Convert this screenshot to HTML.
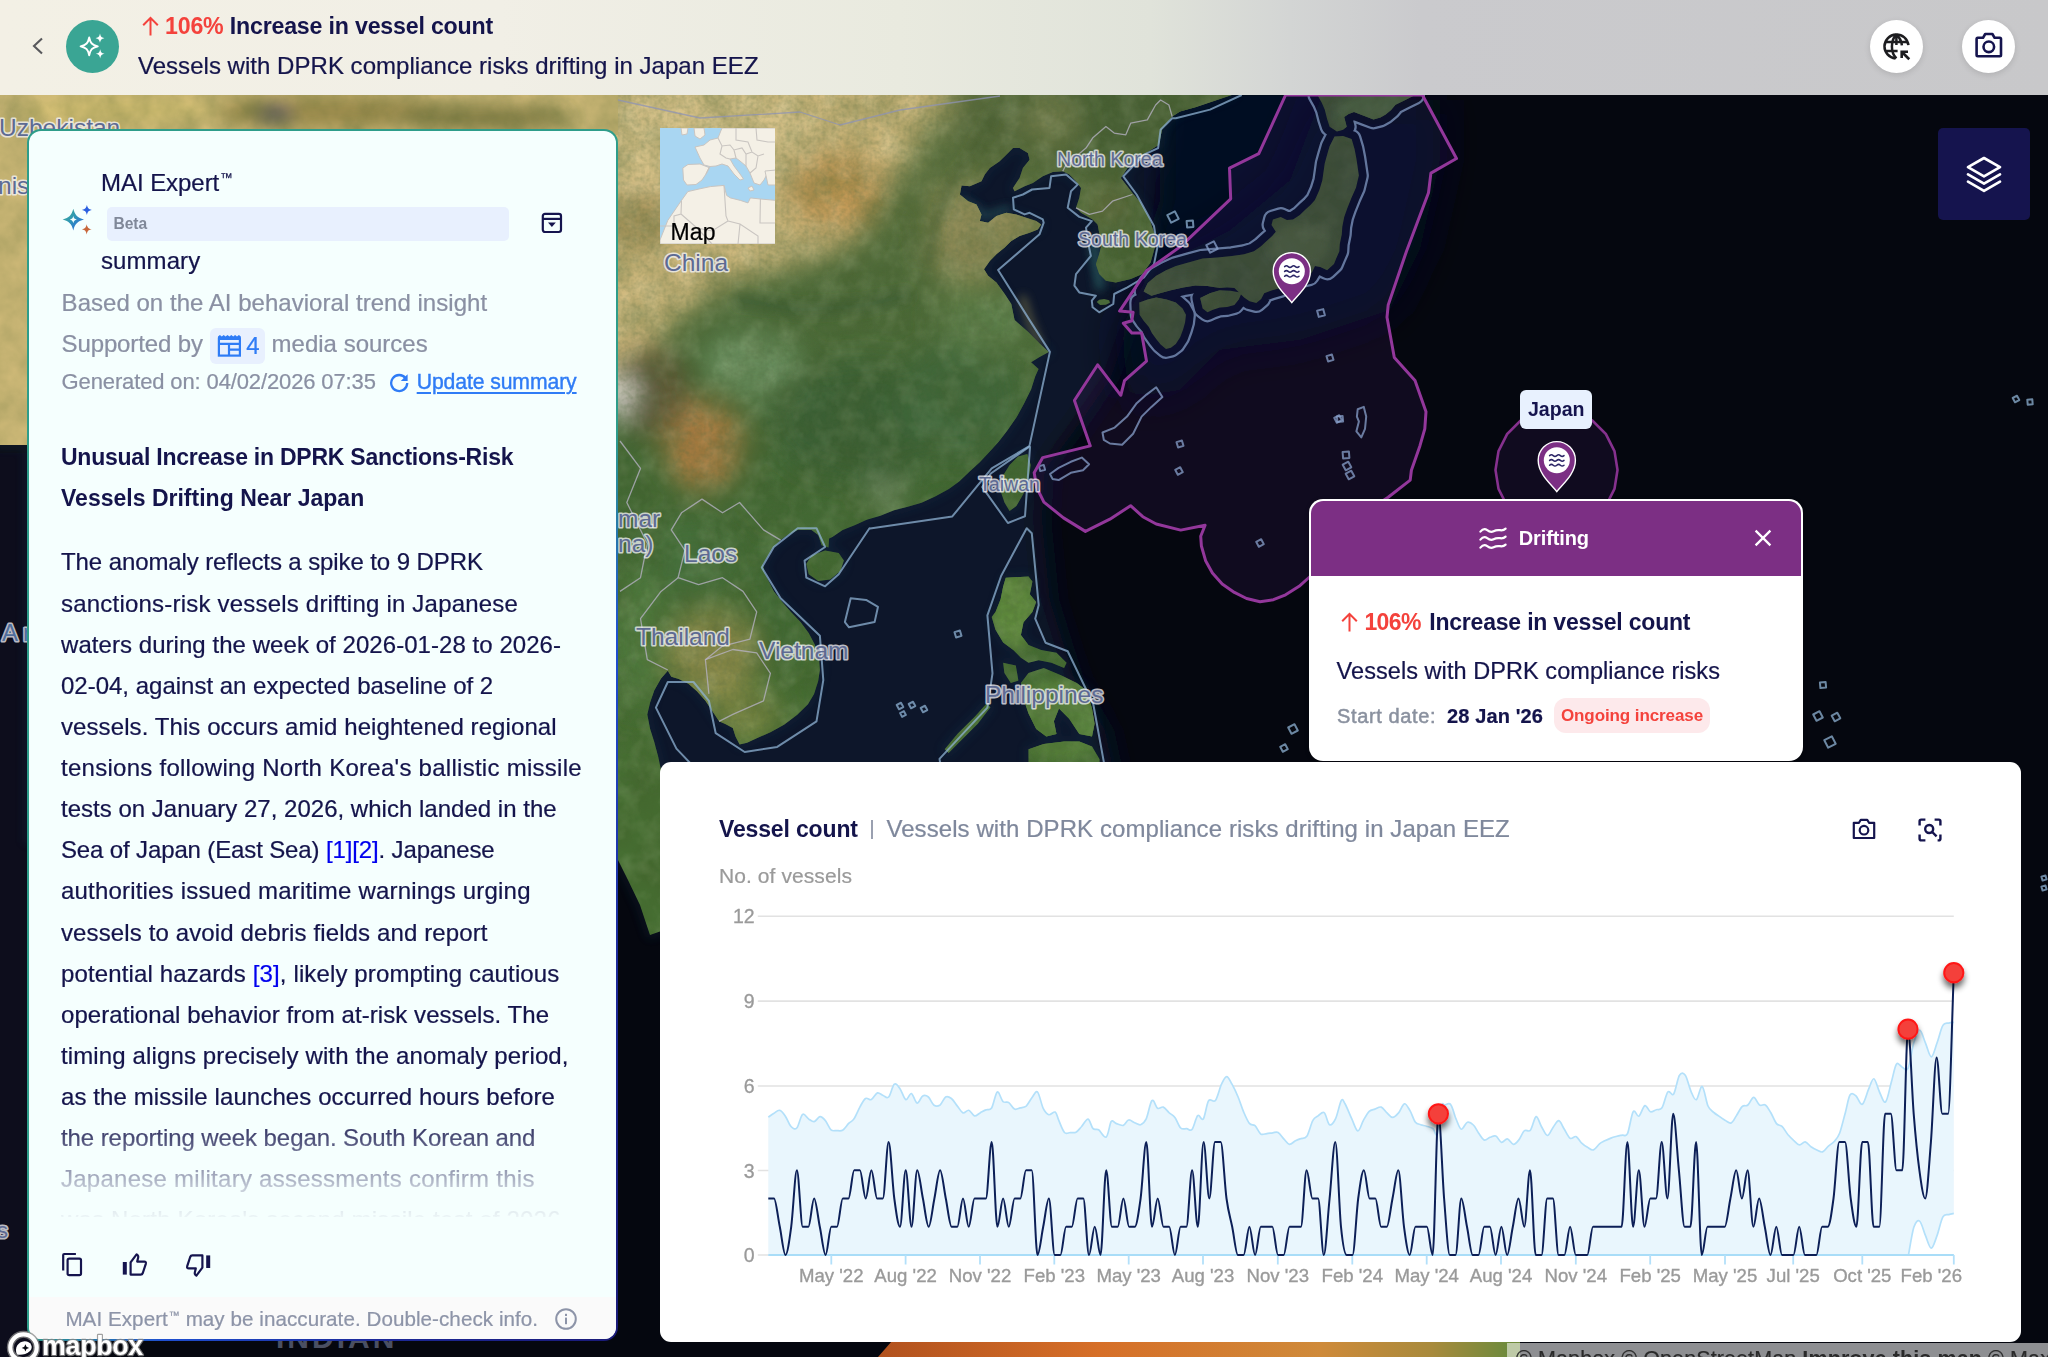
<!DOCTYPE html>
<html lang="en">
<head>
<meta charset="utf-8">
<title>Increase in vessel count</title>
<style>
*{box-sizing:border-box}
html,body{margin:0;padding:0}
body{width:2048px;height:1357px;overflow:hidden;position:relative;background:#05070f;font-family:"Liberation Sans",sans-serif;color:#14144b;font-size:24px;-webkit-font-smoothing:antialiased;-webkit-text-stroke:.22px}
#panel,#card,#popup,#hdr,#jlabel,#thumb,#attr{will-change:transform}
b,h3,.t1,.r1,.pt,.beta,.chipr,#jlabel{-webkit-text-stroke:0}
.abs{position:absolute}
#map{position:absolute;left:0;top:0;width:2048px;height:1357px}
/* header */
#hdr{position:absolute;left:0;top:0;width:2048px;height:95px;background:linear-gradient(90deg,#f3f0e5 0px,#f1efe6 500px,#e9eadf 900px,#e0e3da 1150px,#d3d5d4 1290px,#cacacd 1420px,#c8c8ca 2048px)}
#hdr .back{position:absolute;left:31px;top:36px;width:14px;height:20px}
#hdr .ai{position:absolute;left:66px;top:20px;width:53px;height:53px;border-radius:50%;background:#3aa594}
#hdr .t1{position:absolute;left:141px;top:10.5px;height:30px;line-height:30px;font-weight:700;font-size:23.2px;letter-spacing:-0.2px;white-space:nowrap}
#hdr .t2{position:absolute;left:138px;top:51px;height:30px;line-height:30px;font-size:24px;letter-spacing:0.03px;white-space:nowrap}
.red{color:#f4423c}
.rbtn{position:absolute;top:20px;width:53px;height:53px;border-radius:50%;background:#fff;box-shadow:0 2px 6px rgba(0,0,0,.12)}
#layers{position:absolute;left:1938px;top:128px;width:92px;height:92px;border-radius:5px;background:#15144e}
/* panel */
#panel{position:absolute;left:27px;top:129px;width:591px;height:1212px;border:2px solid transparent;border-radius:14px;background:linear-gradient(#f5fffe,#f5fffe) padding-box,linear-gradient(123deg,#2e9d8a 0%,#2e9d8a 57%,#1f4fd0 67%,#1d2a9a 82%,#1a1a78 100%) border-box;overflow:hidden}
#panel .gray{color:#8a8fa3}
/* popup */
#popup{position:absolute;left:1310px;top:499px;width:492px;height:261px;border-radius:13px;background:#fff;overflow:hidden;border:1.5px solid #fff}
#popup .ph{position:absolute;left:0;top:0;right:0;height:76px;background:#7b2f83}
/* chart card */
#card{position:absolute;left:660px;top:762px;width:1361px;height:580px;border-radius:11px;background:#fff}
</style>
</head>
<body>

<svg id="map" width="2048" height="1357" viewBox="0 0 2048 1357" font-family="Liberation Sans, sans-serif">
<defs>
<linearGradient id="landg" gradientUnits="userSpaceOnUse" x1="0" y1="95" x2="0" y2="760"><stop offset="0" stop-color="#5f7240"/><stop offset=".3" stop-color="#4f6c3a"/><stop offset=".55" stop-color="#426834"/><stop offset="1" stop-color="#466e32"/></linearGradient>
<filter id="noise" x="0" y="0" width="100%" height="100%"><feTurbulence type="fractalNoise" baseFrequency="0.03" numOctaves="4" seed="7"/><feColorMatrix type="matrix" values="0 0 0 0 0.05  0 0 0 0 0.1  0 0 0 0 0.02  .9 .6 .3 0 -.66"/></filter>
<filter id="noise2" x="0" y="0" width="100%" height="100%"><feTurbulence type="fractalNoise" baseFrequency="0.05" numOctaves="3" seed="21"/><feColorMatrix type="matrix" values="0 0 0 0 .85  0 0 0 0 .9  0 0 0 0 .65  .8 .5 .3 0 -.7"/></filter>
<filter id="noise3" x="0" y="0" width="100%" height="100%"><feTurbulence type="fractalNoise" baseFrequency="0.22" numOctaves="2" seed="3"/><feColorMatrix type="matrix" values="0 0 0 0 0.08  0 0 0 0 0.14  0 0 0 0 0.05  1.2 .8 0 0 -.78"/></filter>
<filter id="b2"><feGaussianBlur stdDeviation="2"/></filter>
<filter id="b5"><feGaussianBlur stdDeviation="5"/></filter>
<filter id="b9"><feGaussianBlur stdDeviation="9"/></filter>
<filter id="b14"><feGaussianBlur stdDeviation="14"/></filter>
<filter id="b22" x="-20%" y="-20%" width="140%" height="140%"><feGaussianBlur stdDeviation="22"/></filter>
<clipPath id="landclip">
<polygon points="0.0,0.0 1232.0,0.0 1232.0,95.0 1231.9,95.0 1195.3,107.2 1180.0,111.6 1172.2,116.6 1162.3,128.2 1158.9,144.8 1145.7,153.1 1127.4,168.0 1120.8,177.9 1125.8,184.6 1132.4,192.9 1140.7,202.8 1149.0,217.7 1154.0,232.7 1154.8,247.6 1150.6,262.5 1142.4,274.1 1130.7,279.1 1115.8,282.4 1105.9,280.8 1099.2,274.1 1095.9,264.2 1099.2,254.2 1101.7,244.3 1099.2,232.7 1097.6,224.4 1092.6,219.4 1081.0,212.8 1076.0,207.8 1079.3,197.8 1081.0,187.9 1076.0,181.2 1069.4,174.6 1062.7,171.3 1052.8,172.1 1042.8,176.3 1032.9,182.9 1024.6,186.2 1014.6,191.2 1013.0,187.9 1019.6,177.9 1022.9,168.0 1029.6,159.7 1027.9,153.1 1019.6,148.1 1013.0,148.1 1006.3,154.7 999.7,161.3 989.8,168.0 984.8,174.6 981.5,181.2 969.9,186.2 961.6,185.4 959.9,194.5 968.2,201.2 976.5,204.5 981.5,214.4 979.8,221.1 988.1,222.7 996.4,216.1 1006.3,212.8 1016.3,214.4 1026.2,217.7 1036.2,221.1 1041.2,224.4 1037.9,229.4 1029.6,232.7 1019.6,236.0 1011.3,241.0 1004.7,247.6 996.4,254.2 989.8,260.9 984.0,269.2 988.1,275.8 996.4,282.4 1004.7,294.0 1011.3,304.0 1014.6,320.1 1027.7,331.4 1039.7,343.4 1048.9,351.9 1039.7,357.1 1031.1,362.2 1038.6,369.1 1035.2,376.6 1031.1,389.6 1024.2,403.3 1016.7,417.0 1007.1,430.7 998.6,441.7 990.0,451.3 979.7,462.2 969.4,471.8 959.2,481.4 948.9,489.0 935.2,496.5 921.5,502.7 907.8,506.8 894.1,510.2 880.4,515.7 866.7,519.8 854.7,525.3 842.7,530.1 832.4,536.9 825.5,540.4 825.1,528.2 829.2,536.7 828.5,547.6 821.6,545.2 818.2,535.0 811.4,529.9 797.7,529.9 787.5,535.0 780.6,540.1 772.1,548.7 767.0,557.2 762.9,564.0 764.2,572.6 773.8,591.4 782.3,602.3 790.9,611.9 800.5,622.1 808.7,633.1 814.8,644.4 818.9,656.3 819.9,670.0 818.2,680.9 814.1,693.9 808.0,704.2 797.0,715.1 784.0,724.7 770.4,732.2 756.7,738.3 747.1,742.8 739.6,744.5 735.5,736.6 732.8,728.1 725.3,724.0 719.1,721.3 712.3,711.0 705.4,700.8 696.9,691.2 688.4,683.7 678.8,678.9 671.3,676.8 667.8,670.7 661.0,678.5 654.2,690.5 650.1,702.5 647.3,714.4 650.1,728.8 654.2,741.8 658.3,757.1 661.0,770.1 662.0,775.0 668.0,800.0 664.0,840.0 660.0,880.0 664.0,930.0 650.0,935.0 640.0,905.0 628.0,880.0 618.0,860.0 600.0,840.0 27.0,840.0 27.0,445.0 0.0,445.0"/>
<polygon points="1027.4,454.0 1030.8,464.9 1028.7,478.6 1023.3,494.0 1016.4,505.9 1009.6,511.1 1004.5,502.5 1000.0,489.5 1002.1,476.9 1009.6,464.9 1018.2,456.4"/>
<polygon points="811.4,555.5 825.1,550.4 838.7,553.1 843.9,560.6 840.4,570.9 830.2,579.4 818.2,581.1 808.7,574.3 806.3,564.0"/>
<polygon points="1005.7,577.8 1028.5,576.5 1032.4,581.6 1029.8,594.3 1036.2,601.9 1032.4,612.0 1023.5,622.2 1020.9,634.9 1028.5,645.1 1041.2,650.1 1056.5,652.7 1066.6,662.8 1064.1,667.9 1051.4,662.8 1038.7,660.3 1028.5,662.8 1020.9,657.8 1013.3,650.1 1003.1,642.5 995.5,629.8 991.7,617.1 995.5,612.0 1000.6,599.3 1003.1,586.7"/>
<polygon points="1003.1,662.8 1015.8,665.4 1018.4,680.6 1010.8,683.1 1004.4,673.0"/>
<polygon points="1028.5,673.0 1043.8,667.9 1061.6,675.5 1076.8,683.1 1086.9,690.8 1092.0,708.5 1094.6,723.8 1092.0,736.5 1079.3,733.9 1069.2,718.7 1059.0,708.5 1053.9,721.2 1056.5,733.9 1046.3,736.5 1036.2,728.9 1028.5,713.6 1023.5,698.4 1020.9,683.1"/>
<polygon points="986.6,703.5 990.5,707.3 977.8,723.8 962.5,739.0 948.6,753.0 944.7,749.2 957.4,733.9 975.2,716.2"/>
<polygon points="1028.5,749.2 1043.8,744.1 1064.1,741.6 1079.3,741.6 1092.0,746.6 1099.6,759.3 1099.6,770.8 1028.5,770.8"/>
</clipPath>
<clipPath id="jpclip">
<polygon points="1334.5,136.5 1343.0,136.0 1351.6,138.9 1354.5,148.7 1356.4,158.5 1358.9,175.6 1356.0,187.8 1351.6,197.5 1347.2,208.5 1344.2,217.1 1342.3,226.8 1341.8,234.2 1339.8,243.9 1339.4,251.2 1336.4,258.1 1334.0,263.9 1327.1,270.3 1320.3,267.1 1314.9,265.9 1312.5,271.3 1309.6,276.2 1301.5,278.1 1293.0,280.5 1286.1,284.2 1280.8,287.9 1272.2,290.3 1264.2,293.2 1261.2,298.9 1256.3,303.0 1249.5,301.3 1244.1,297.6 1238.0,291.5 1234.4,287.9 1227.1,287.4 1219.7,287.9 1207.5,285.9 1195.3,285.4 1183.1,287.4 1170.9,290.3 1159.9,293.2 1151.4,295.7 1143.6,291.5 1147.7,283.0 1156.2,275.7 1166.0,270.3 1175.8,265.9 1189.2,262.2 1202.6,258.6 1217.3,257.4 1231.9,256.1 1244.1,254.2 1253.9,251.2 1260.7,246.4 1266.1,241.5 1272.2,236.1 1275.9,231.7 1271.5,224.9 1272.9,219.5 1280.8,217.1 1286.9,220.0 1293.0,219.5 1299.8,215.1 1305.2,209.7 1310.5,204.9 1314.9,200.0 1319.3,190.2 1322.3,180.4 1323.7,170.7 1324.7,163.4 1327.1,154.8 1329.6,146.3"/>
<polygon points="1139.2,302.5 1147.7,299.6 1156.2,297.6 1166.5,299.6 1175.8,302.5 1182.6,308.6 1186.0,314.7 1185.1,322.5 1183.1,329.4 1180.2,337.2 1175.8,344.0 1170.9,347.7 1166.0,348.9 1160.6,344.5 1156.2,339.1 1151.9,333.0 1148.9,326.9 1143.6,320.8 1139.6,314.7"/>
<polygon points="1200.2,298.1 1210.0,293.2 1219.7,290.3 1230.7,290.8 1241.7,292.8 1238.8,299.6 1234.4,305.0 1227.1,306.9 1219.7,307.4 1212.9,309.8 1207.5,312.3 1202.6,308.6"/>
<polygon points="1317.4,95.0 1321.8,102.8 1324.7,109.6 1327.1,118.9 1329.6,126.7 1336.9,131.6 1343.0,129.7 1346.7,126.7 1344.2,117.0 1348.6,114.0 1354.0,112.1 1363.8,115.8 1373.5,119.4 1380.4,117.5 1385.7,114.5 1391.1,110.1 1395.5,104.8 1405.3,99.9 1415.0,95.0 1415.0,85.2 1317.4,85.2"/>
</clipPath><clipPath id="mapclip"><rect x="0" y="95" width="2048" height="1262"/></clipPath></defs>
<rect width="2048" height="1357" fill="#05070f"/>
<g clip-path="url(#mapclip)">
<polygon points="560.0,60.0 1240.0,60.0 1200.0,120.0 1165.0,180.0 1160.0,240.0 1150.0,290.0 1128.0,330.0 1110.0,380.0 1075.0,430.0 1045.0,470.0 1042.0,520.0 1050.0,600.0 1075.0,680.0 1105.0,730.0 1120.0,800.0 560.0,800.0" fill="#09152c" filter="url(#b14)"/>
<polygon points="1160.0,80.0 1345.0,80.0 1350.0,150.0 1335.0,215.0 1295.0,265.0 1225.0,292.0 1150.0,312.0 1140.0,260.0 1160.0,200.0" fill="#050a20" filter="url(#b14)"/>
<polygon points="1120.0,330.0 1150.0,270.0 1230.0,230.0 1290.0,180.0 1320.0,100.0 1440.0,100.0 1440.0,160.0 1420.0,250.0 1390.0,310.0 1300.0,340.0 1220.0,350.0 1180.0,390.0 1130.0,400.0" fill="#050922" filter="url(#b22)"/>
<rect x="-20" y="445" width="60" height="930" fill="#08111f" filter="url(#b9)"/>
<g filter="url(#b5)" opacity=".4">
<polygon points="0.0,0.0 1232.0,0.0 1232.0,95.0 1231.9,95.0 1195.3,107.2 1180.0,111.6 1172.2,116.6 1162.3,128.2 1158.9,144.8 1145.7,153.1 1127.4,168.0 1120.8,177.9 1125.8,184.6 1132.4,192.9 1140.7,202.8 1149.0,217.7 1154.0,232.7 1154.8,247.6 1150.6,262.5 1142.4,274.1 1130.7,279.1 1115.8,282.4 1105.9,280.8 1099.2,274.1 1095.9,264.2 1099.2,254.2 1101.7,244.3 1099.2,232.7 1097.6,224.4 1092.6,219.4 1081.0,212.8 1076.0,207.8 1079.3,197.8 1081.0,187.9 1076.0,181.2 1069.4,174.6 1062.7,171.3 1052.8,172.1 1042.8,176.3 1032.9,182.9 1024.6,186.2 1014.6,191.2 1013.0,187.9 1019.6,177.9 1022.9,168.0 1029.6,159.7 1027.9,153.1 1019.6,148.1 1013.0,148.1 1006.3,154.7 999.7,161.3 989.8,168.0 984.8,174.6 981.5,181.2 969.9,186.2 961.6,185.4 959.9,194.5 968.2,201.2 976.5,204.5 981.5,214.4 979.8,221.1 988.1,222.7 996.4,216.1 1006.3,212.8 1016.3,214.4 1026.2,217.7 1036.2,221.1 1041.2,224.4 1037.9,229.4 1029.6,232.7 1019.6,236.0 1011.3,241.0 1004.7,247.6 996.4,254.2 989.8,260.9 984.0,269.2 988.1,275.8 996.4,282.4 1004.7,294.0 1011.3,304.0 1014.6,320.1 1027.7,331.4 1039.7,343.4 1048.9,351.9 1039.7,357.1 1031.1,362.2 1038.6,369.1 1035.2,376.6 1031.1,389.6 1024.2,403.3 1016.7,417.0 1007.1,430.7 998.6,441.7 990.0,451.3 979.7,462.2 969.4,471.8 959.2,481.4 948.9,489.0 935.2,496.5 921.5,502.7 907.8,506.8 894.1,510.2 880.4,515.7 866.7,519.8 854.7,525.3 842.7,530.1 832.4,536.9 825.5,540.4 825.1,528.2 829.2,536.7 828.5,547.6 821.6,545.2 818.2,535.0 811.4,529.9 797.7,529.9 787.5,535.0 780.6,540.1 772.1,548.7 767.0,557.2 762.9,564.0 764.2,572.6 773.8,591.4 782.3,602.3 790.9,611.9 800.5,622.1 808.7,633.1 814.8,644.4 818.9,656.3 819.9,670.0 818.2,680.9 814.1,693.9 808.0,704.2 797.0,715.1 784.0,724.7 770.4,732.2 756.7,738.3 747.1,742.8 739.6,744.5 735.5,736.6 732.8,728.1 725.3,724.0 719.1,721.3 712.3,711.0 705.4,700.8 696.9,691.2 688.4,683.7 678.8,678.9 671.3,676.8 667.8,670.7 661.0,678.5 654.2,690.5 650.1,702.5 647.3,714.4 650.1,728.8 654.2,741.8 658.3,757.1 661.0,770.1 662.0,775.0 668.0,800.0 664.0,840.0 660.0,880.0 664.0,930.0 650.0,935.0 640.0,905.0 628.0,880.0 618.0,860.0 600.0,840.0 27.0,840.0 27.0,445.0 0.0,445.0" fill="none" stroke="#163650" stroke-width="5"/>
<polygon points="1027.4,454.0 1030.8,464.9 1028.7,478.6 1023.3,494.0 1016.4,505.9 1009.6,511.1 1004.5,502.5 1000.0,489.5 1002.1,476.9 1009.6,464.9 1018.2,456.4" fill="none" stroke="#163650" stroke-width="5"/>
<polygon points="811.4,555.5 825.1,550.4 838.7,553.1 843.9,560.6 840.4,570.9 830.2,579.4 818.2,581.1 808.7,574.3 806.3,564.0" fill="none" stroke="#163650" stroke-width="5"/>
<polygon points="1005.7,577.8 1028.5,576.5 1032.4,581.6 1029.8,594.3 1036.2,601.9 1032.4,612.0 1023.5,622.2 1020.9,634.9 1028.5,645.1 1041.2,650.1 1056.5,652.7 1066.6,662.8 1064.1,667.9 1051.4,662.8 1038.7,660.3 1028.5,662.8 1020.9,657.8 1013.3,650.1 1003.1,642.5 995.5,629.8 991.7,617.1 995.5,612.0 1000.6,599.3 1003.1,586.7" fill="none" stroke="#163650" stroke-width="5"/>
<polygon points="1003.1,662.8 1015.8,665.4 1018.4,680.6 1010.8,683.1 1004.4,673.0" fill="none" stroke="#163650" stroke-width="5"/>
<polygon points="1028.5,673.0 1043.8,667.9 1061.6,675.5 1076.8,683.1 1086.9,690.8 1092.0,708.5 1094.6,723.8 1092.0,736.5 1079.3,733.9 1069.2,718.7 1059.0,708.5 1053.9,721.2 1056.5,733.9 1046.3,736.5 1036.2,728.9 1028.5,713.6 1023.5,698.4 1020.9,683.1" fill="none" stroke="#163650" stroke-width="5"/>
<polygon points="986.6,703.5 990.5,707.3 977.8,723.8 962.5,739.0 948.6,753.0 944.7,749.2 957.4,733.9 975.2,716.2" fill="none" stroke="#163650" stroke-width="5"/>
<polygon points="1028.5,749.2 1043.8,744.1 1064.1,741.6 1079.3,741.6 1092.0,746.6 1099.6,759.3 1099.6,770.8 1028.5,770.8" fill="none" stroke="#163650" stroke-width="5"/>
</g>
<g filter="url(#b5)" opacity=".8"><path d="M1022 296 L1030 322 L1040 346" stroke="#7f7a4e" stroke-width="7" fill="none" stroke-opacity=".8"/><path d="M1092 236 L1096 262 L1100 290" stroke="#2e6a6a" stroke-width="7" fill="none"/><path d="M962 200 L985 216 L1010 208" stroke="#2a5a5e" stroke-width="5" fill="none"/></g>
<g clip-path="url(#landclip)">
<rect x="0" y="0" width="1320" height="1357" fill="url(#landg)"/>
<g filter="url(#b14)">
<polygon points="0.0,0.0 965.0,0.0 948.0,100.0 908.0,160.0 882.0,200.0 852.0,245.0 800.0,262.0 740.0,280.0 700.0,300.0 650.0,345.0 600.0,380.0 0.0,380.0" fill="#d0b97e"/>
<ellipse cx="700" cy="150" rx="120" ry="70" fill="#d6c188"/>
<ellipse cx="835" cy="190" rx="50" ry="40" fill="#c49a56"/>
<ellipse cx="640" cy="220" rx="40" ry="30" fill="#a8945c"/>
<polygon points="932.0,185.0 1000.0,180.0 1046.0,215.0 1048.0,232.0 1015.0,252.0 1002.0,278.0 960.0,288.0 928.0,262.0" fill="#918c58"/>
<polygon points="940.0,275.0 1005.0,285.0 1020.0,330.0 990.0,350.0 940.0,330.0" fill="#66804a"/>
<ellipse cx="1120" cy="120" rx="120" ry="60" fill="#4a6034"/>
<ellipse cx="1050" cy="120" rx="28" ry="34" fill="#6f7a4a"/>
<ellipse cx="985" cy="125" rx="26" ry="40" fill="#5a6a3c"/>
<ellipse cx="1125" cy="235" rx="30" ry="60" fill="#486436"/>
<ellipse cx="1108" cy="205" rx="16" ry="16" fill="#6a6e40"/>
<ellipse cx="753" cy="364" rx="48" ry="32" fill="#6a9060"/>
<ellipse cx="703" cy="445" rx="38" ry="44" fill="#b07e42"/>
<ellipse cx="650" cy="390" rx="40" ry="45" fill="#5e5636"/>
<ellipse cx="618" cy="395" rx="18" ry="22" fill="#d8d4cc"/>
<ellipse cx="860" cy="420" rx="90" ry="60" fill="#3b6035"/>
<ellipse cx="960" cy="400" rx="60" ry="60" fill="#41683a"/>
<ellipse cx="985" cy="325" rx="42" ry="32" fill="#5c7e48"/>
<ellipse cx="886" cy="496" rx="14" ry="10" fill="#9aa88a"/>
<ellipse cx="712" cy="655" rx="45" ry="45" fill="#8e8c4c"/>
<ellipse cx="745" cy="715" rx="35" ry="25" fill="#7f8a45"/>
<ellipse cx="690" cy="560" rx="50" ry="40" fill="#44703a"/>
<ellipse cx="775" cy="610" rx="20" ry="60" fill="#416b35"/>
<ellipse cx="640" cy="640" rx="25" ry="70" fill="#4f7a3c"/>
</g>
<g filter="url(#b5)" fill="none" stroke-linecap="round"><path d="M1000 105 L975 150 L950 185 L935 225 L928 262" stroke="#4c6034" stroke-width="10" stroke-opacity=".6"/><path d="M740 300 L800 310 L860 306 L905 296" stroke="#3e5c30" stroke-width="16" stroke-opacity=".6"/><path d="M905 215 L915 260" stroke="#55683a" stroke-width="8" stroke-opacity=".5"/></g>
<g filter="url(#b5)"><ellipse cx="1015" cy="610" rx="22" ry="40" fill="#5f8a3e"/><ellipse cx="1060" cy="720" rx="45" ry="40" fill="#56803a"/></g>
<rect x="0" y="95" width="1320" height="1262" filter="url(#noise)" opacity=".5"/>
<rect x="0" y="95" width="1320" height="1262" filter="url(#noise2)" opacity=".28"/>
<rect x="600" y="95" width="720" height="700" filter="url(#noise3)" opacity=".32"/>
</g>
<rect x="0" y="0" width="618" height="445" fill="#cdb877"/>
<g filter="url(#b9)"><ellipse cx="330" cy="112" rx="120" ry="16" fill="#9a8a4c"/><ellipse cx="480" cy="118" rx="90" ry="12" fill="#7f7a42"/><ellipse cx="120" cy="110" rx="100" ry="14" fill="#d4bf72"/><ellipse cx="275" cy="114" rx="18" ry="6" fill="#1a2a6a"/></g>
<rect x="0" y="95" width="618" height="40" filter="url(#noise)" opacity=".45"/>
<rect x="0" y="130" width="27" height="315" filter="url(#noise)" opacity=".35"/>
<g clip-path="url(#jpclip)"><rect x="1100" y="90" width="400" height="300" fill="#36502d"/><g filter="url(#b5)"><ellipse cx="1300" cy="245" rx="30" ry="22" fill="#445f38"/><ellipse cx="1180" cy="290" rx="40" ry="14" fill="#3c5632"/><ellipse cx="1395" cy="115" rx="60" ry="30" fill="#3f6134"/></g><rect x="1100" y="90" width="400" height="300" filter="url(#noise)" opacity=".55"/><rect x="1100" y="90" width="400" height="300" filter="url(#noise2)" opacity=".12"/></g>
<polygon points="1096.7,302.0 1099.2,299.7 1104.2,299.0 1109.2,300.3 1110.0,302.7 1105.9,304.7 1100.1,305.0" fill="#4a6a3a"/>
<linearGradient id="aus" gradientUnits="userSpaceOnUse" x1="880" x2="1507"><stop offset="0" stop-color="#b2521e"/><stop offset=".35" stop-color="#d66f28"/><stop offset=".7" stop-color="#cf8a3a"/><stop offset=".88" stop-color="#a88a3c"/><stop offset="1" stop-color="#6f8a3c"/></linearGradient>
<polygon points="878,1357 892,1341 1520,1341 1520,1357" fill="url(#aus)"/>
<g fill="none" stroke="#8fb3d4" stroke-width="2" stroke-opacity=".75" stroke-linejoin="round">
<path d="M1241.7 95.0 L1210.0 109.6 L1175.8 118.2 L1172.2 118.2 L1160.6 129.8 L1158.1 148.1 L1144.0 154.7 L1123.3 176.3 L1136.6 194.5 L1154.0 226.0 L1157.3 247.6 L1154.0 264.2 L1144.0 277.5 L1127.4 287.4 L1114.2 294.0 L1113.3 304.0 L1099.2 312.3 L1092.6 307.3 L1091.8 300.7 L1095.9 295.7 L1079.3 292.4 L1074.4 285.7 L1076.0 274.1 L1090.9 255.9 L1088.4 244.3 L1086.0 227.7 L1091.8 221.1 L1079.3 216.9 L1067.7 207.8 L1071.0 191.2 L1077.7 184.6 L1066.1 174.6 L1051.1 176.3 L1049.5 187.9 L1032.1 189.5 L1022.9 194.5 L1013.0 197.8 L1013.8 209.4 L1024.6 214.4 L1029.6 212.8 L1042.8 219.4 L1043.7 222.7 L1039.5 234.3 L998.1 270.0 L1029.6 320.1 L1049.9 351.9 L1029.4 446.1 L991.7 468.4 L952.3 516.4 L870.1 528.4 L869.5 528.2 L838.7 574.3 L825.1 586.3 L806.3 577.7 L804.6 560.6 L825.1 547.0 L816.5 528.2 L797.7 528.2 L773.8 547.0 L761.8 567.5 L780.6 598.2 L819.9 635.8 L823.3 680.2 L816.5 721.3 L777.2 746.9 L744.7 752.0 L715.7 733.2 L708.9 700.8 L693.5 682.0 L667.8 682.0 L655.9 707.6 L676.4 748.6 L696.9 770.1"/>
<path d="M1030.1 446.1 L1025.0 516.2 L1007.9 523.0 L982.3 487.1 L990.8 473.5 L1030.1 446.1"/>
<path d="M941.3 770.1 L939.5 758.9 L961.8 734.9 L987.4 707.6 L992.5 673.4 L987.4 615.3 L1001.1 576.0 L1026.7 528.2 L1031.8 533.3 L1038.7 605.1 L1035.2 618.7 L1045.5 642.7 L1067.7 651.2 L1093.3 704.2 L1105.3 770.1"/>
<path d="M850.7 598.2 L866.1 599.9 L878.0 606.8 L874.6 622.1 L849.0 627.3 L844.9 622.1Z"/>
<polygon points="1178.7,218.8 1171.2,222.7 1167.3,215.2 1174.8,211.3"/>
<polygon points="1193.4,226.9 1187.1,227.4 1186.6,221.1 1192.9,220.6"/>
<polygon points="1217.7,248.8 1210.2,252.7 1206.3,245.2 1213.8,241.3"/>
<polygon points="1324.9,315.2 1318.8,316.9 1317.1,310.8 1323.2,309.1"/>
<polygon points="1333.5,359.9 1328.1,361.5 1326.5,356.1 1331.9,354.5"/>
<polygon points="1343.1,421.6 1337.4,422.1 1336.9,416.4 1342.6,415.9"/>
<polygon points="1183.5,445.9 1178.1,447.5 1176.5,442.1 1181.9,440.5"/>
<polygon points="1182.8,472.2 1177.8,474.8 1175.2,469.8 1180.2,467.2"/>
<polygon points="1263.8,544.2 1258.8,546.8 1256.2,541.8 1261.2,539.2"/>
<polygon points="1341.8,420.2 1336.8,422.8 1334.2,417.8 1339.2,415.2"/>
<polygon points="1349.4,457.9 1343.1,458.4 1342.6,452.1 1348.9,451.6"/>
<polygon points="1351.3,467.3 1345.7,470.3 1342.7,464.7 1348.3,461.7"/>
<polygon points="1354.3,476.3 1348.7,479.3 1345.7,473.7 1351.3,470.7"/>
<polygon points="961.5,635.9 956.1,637.5 954.5,632.1 959.9,630.5"/>
<polygon points="1045.1,469.7 1040.3,471.1 1038.9,466.3 1043.7,464.9"/>
<polygon points="1826.1,687.6 1820.4,688.1 1819.9,682.4 1825.6,681.9"/>
<polygon points="1840.3,718.3 1834.7,721.3 1831.7,715.7 1837.3,712.7"/>
<polygon points="1822.8,717.5 1816.5,720.8 1813.2,714.5 1819.5,711.2"/>
<polygon points="1835.7,743.8 1828.2,747.7 1824.3,740.2 1831.8,736.3"/>
<polygon points="1297.8,730.5 1291.5,733.8 1288.2,727.5 1294.5,724.2"/>
<polygon points="1287.8,749.2 1282.8,751.8 1280.2,746.8 1285.2,744.2"/>
<polygon points="2019.3,400.0 2015.0,402.3 2012.7,398.0 2017.0,395.7"/>
<polygon points="2032.7,404.3 2027.7,404.7 2027.3,399.7 2032.3,399.3"/>
<polygon points="2046.6,879.4 2042.6,880.6 2041.4,876.6 2045.4,875.4"/>
<polygon points="2046.6,889.4 2042.6,890.6 2041.4,886.6 2045.4,885.4"/>
<polygon points="903.3,707.0 899.0,709.3 896.7,705.0 901.0,702.7"/>
<polygon points="915.3,706.0 911.0,708.3 908.7,704.0 913.0,701.7"/>
<polygon points="927.3,710.0 923.0,712.3 920.7,708.0 925.0,705.7"/>
<polygon points="905.9,714.9 902.1,716.9 900.1,713.1 903.9,711.1"/>
<polygon points="1100.9,1.9 1097.1,3.9 1095.1,0.1 1098.9,-1.9"/>
<path d="M1357.7 409.3 L1363.8 406.9 L1366.2 416.6 L1365.0 428.8 L1361.3 437.4 L1356.4 431.3 L1358.9 421.5 L1356.9 416.6Z"/>
<path d="M1102.5 432.5 L1114.7 427.6 L1127.0 416.6 L1136.7 403.2 L1146.5 394.6 L1156.2 387.3 L1162.4 397.1 L1151.4 406.9 L1141.6 416.6 L1133.1 433.7 L1122.1 444.7 L1109.9 443.5 L1103.8 439.8Z"/>
<path d="M1050.0 474.0 L1058.6 467.9 L1070.8 461.8 L1081.8 457.6 L1089.1 464.2 L1083.0 470.3 L1070.8 472.8 L1058.6 480.1 L1052.5 478.9Z"/>
</g>
<mask id="jpring" maskUnits="userSpaceOnUse" x="1080" y="60" width="460" height="360"><rect x="1080" y="60" width="460" height="360" fill="#000"/>
<polygon points="1334.5,136.5 1343.0,136.0 1351.6,138.9 1354.5,148.7 1356.4,158.5 1358.9,175.6 1356.0,187.8 1351.6,197.5 1347.2,208.5 1344.2,217.1 1342.3,226.8 1341.8,234.2 1339.8,243.9 1339.4,251.2 1336.4,258.1 1334.0,263.9 1327.1,270.3 1320.3,267.1 1314.9,265.9 1312.5,271.3 1309.6,276.2 1301.5,278.1 1293.0,280.5 1286.1,284.2 1280.8,287.9 1272.2,290.3 1264.2,293.2 1261.2,298.9 1256.3,303.0 1249.5,301.3 1244.1,297.6 1238.0,291.5 1234.4,287.9 1227.1,287.4 1219.7,287.9 1207.5,285.9 1195.3,285.4 1183.1,287.4 1170.9,290.3 1159.9,293.2 1151.4,295.7 1143.6,291.5 1147.7,283.0 1156.2,275.7 1166.0,270.3 1175.8,265.9 1189.2,262.2 1202.6,258.6 1217.3,257.4 1231.9,256.1 1244.1,254.2 1253.9,251.2 1260.7,246.4 1266.1,241.5 1272.2,236.1 1275.9,231.7 1271.5,224.9 1272.9,219.5 1280.8,217.1 1286.9,220.0 1293.0,219.5 1299.8,215.1 1305.2,209.7 1310.5,204.9 1314.9,200.0 1319.3,190.2 1322.3,180.4 1323.7,170.7 1324.7,163.4 1327.1,154.8 1329.6,146.3" fill="#fff" stroke="#fff" stroke-width="20" stroke-linejoin="round"/>
<polygon points="1139.2,302.5 1147.7,299.6 1156.2,297.6 1166.5,299.6 1175.8,302.5 1182.6,308.6 1186.0,314.7 1185.1,322.5 1183.1,329.4 1180.2,337.2 1175.8,344.0 1170.9,347.7 1166.0,348.9 1160.6,344.5 1156.2,339.1 1151.9,333.0 1148.9,326.9 1143.6,320.8 1139.6,314.7" fill="#fff" stroke="#fff" stroke-width="20" stroke-linejoin="round"/>
<polygon points="1200.2,298.1 1210.0,293.2 1219.7,290.3 1230.7,290.8 1241.7,292.8 1238.8,299.6 1234.4,305.0 1227.1,306.9 1219.7,307.4 1212.9,309.8 1207.5,312.3 1202.6,308.6" fill="#fff" stroke="#fff" stroke-width="20" stroke-linejoin="round"/>
<polygon points="1317.4,95.0 1321.8,102.8 1324.7,109.6 1327.1,118.9 1329.6,126.7 1336.9,131.6 1343.0,129.7 1346.7,126.7 1344.2,117.0 1348.6,114.0 1354.0,112.1 1363.8,115.8 1373.5,119.4 1380.4,117.5 1385.7,114.5 1391.1,110.1 1395.5,104.8 1405.3,99.9 1415.0,95.0 1415.0,85.2 1317.4,85.2" fill="#fff" stroke="#fff" stroke-width="20" stroke-linejoin="round"/>
<polygon points="1334.5,136.5 1343.0,136.0 1351.6,138.9 1354.5,148.7 1356.4,158.5 1358.9,175.6 1356.0,187.8 1351.6,197.5 1347.2,208.5 1344.2,217.1 1342.3,226.8 1341.8,234.2 1339.8,243.9 1339.4,251.2 1336.4,258.1 1334.0,263.9 1327.1,270.3 1320.3,267.1 1314.9,265.9 1312.5,271.3 1309.6,276.2 1301.5,278.1 1293.0,280.5 1286.1,284.2 1280.8,287.9 1272.2,290.3 1264.2,293.2 1261.2,298.9 1256.3,303.0 1249.5,301.3 1244.1,297.6 1238.0,291.5 1234.4,287.9 1227.1,287.4 1219.7,287.9 1207.5,285.9 1195.3,285.4 1183.1,287.4 1170.9,290.3 1159.9,293.2 1151.4,295.7 1143.6,291.5 1147.7,283.0 1156.2,275.7 1166.0,270.3 1175.8,265.9 1189.2,262.2 1202.6,258.6 1217.3,257.4 1231.9,256.1 1244.1,254.2 1253.9,251.2 1260.7,246.4 1266.1,241.5 1272.2,236.1 1275.9,231.7 1271.5,224.9 1272.9,219.5 1280.8,217.1 1286.9,220.0 1293.0,219.5 1299.8,215.1 1305.2,209.7 1310.5,204.9 1314.9,200.0 1319.3,190.2 1322.3,180.4 1323.7,170.7 1324.7,163.4 1327.1,154.8 1329.6,146.3" fill="#000" stroke="#000" stroke-width="15.5" stroke-linejoin="round"/>
<polygon points="1139.2,302.5 1147.7,299.6 1156.2,297.6 1166.5,299.6 1175.8,302.5 1182.6,308.6 1186.0,314.7 1185.1,322.5 1183.1,329.4 1180.2,337.2 1175.8,344.0 1170.9,347.7 1166.0,348.9 1160.6,344.5 1156.2,339.1 1151.9,333.0 1148.9,326.9 1143.6,320.8 1139.6,314.7" fill="#000" stroke="#000" stroke-width="15.5" stroke-linejoin="round"/>
<polygon points="1200.2,298.1 1210.0,293.2 1219.7,290.3 1230.7,290.8 1241.7,292.8 1238.8,299.6 1234.4,305.0 1227.1,306.9 1219.7,307.4 1212.9,309.8 1207.5,312.3 1202.6,308.6" fill="#000" stroke="#000" stroke-width="15.5" stroke-linejoin="round"/>
<polygon points="1317.4,95.0 1321.8,102.8 1324.7,109.6 1327.1,118.9 1329.6,126.7 1336.9,131.6 1343.0,129.7 1346.7,126.7 1344.2,117.0 1348.6,114.0 1354.0,112.1 1363.8,115.8 1373.5,119.4 1380.4,117.5 1385.7,114.5 1391.1,110.1 1395.5,104.8 1405.3,99.9 1415.0,95.0 1415.0,85.2 1317.4,85.2" fill="#000" stroke="#000" stroke-width="15.5" stroke-linejoin="round"/>
</mask>
<rect x="1080" y="60" width="460" height="360" fill="#8fb3d4" opacity=".7" mask="url(#jpring)"/>
<g fill="none" stroke="#b9b4c8" stroke-width="1.3" stroke-opacity=".75" stroke-linejoin="round">
<path d="M1062.7 171.3 L1066.1 164.7 L1086.0 148.1 L1092.6 138.1 L1105.9 126.5 L1114.2 133.1 L1125.8 134.8 L1130.7 123.2 L1147.3 119.9 L1155.6 105.0 L1160.6 100.0 L1168.9 105.0 L1172.2 116.6"/>
<path d="M1076.0 207.8 L1089.3 214.4 L1102.5 211.1 L1112.5 201.2 L1132.4 194.5"/>
<path d="M620.0 441.0 L640.5 468.4 L626.8 502.5 L647.3 543.5 L640.5 577.7 L620.0 591.4"/>
<path d="M780.6 540.1 L763.5 529.9 L739.6 502.5 L722.5 512.8 L702.0 499.1 L681.5 512.8 L671.3 529.9 L684.9 550.4 L678.1 577.7 L698.6 584.6 L722.5 577.7 L743.0 591.4 L756.7 611.9 L749.9 639.2 L722.5 646.1 L705.4 659.7 L708.9 693.9"/>
<path d="M678.1 577.7 L661.0 591.4 L640.5 618.7 L647.3 659.7 L667.8 670.0"/>
<path d="M705.4 659.7 L732.8 649.5 L756.7 652.9 L770.4 673.4 L763.5 700.8 L732.8 714.4 L719.1 721.3"/>
<path d="M618.0 100.0 L700.0 118.0 L800.0 112.0 L840.0 125.0 L900.0 110.0 L1000.0 96.0" stroke="#8d93b4"/>
</g>
<polygon points="1285.6,95.0 1258.8,153.6 1229.5,168.2 1230.7,198.8 1180.7,246.4 1146.5,270.8 1119.6,311.1 1133.1,312.3 1131.8,320.8 1123.3,323.3 1131.8,333.0 1141.6,333.0 1146.5,361.1 1124.5,380.6 1120.8,395.3 1097.7,364.8 1074.5,400.2 1074.5,400.8 1090.3,445.9 1042.7,457.6 1034.2,472.8 1036.6,487.4 1043.9,502.1 1063.5,517.9 1085.4,531.4 1109.9,519.2 1130.6,505.7 1142.8,516.7 1156.2,524.0 1180.7,530.1 1205.1,525.3 1200.7,536.2 1201.4,546.0 1205.6,560.7 1212.4,572.9 1222.2,583.9 1234.4,592.4 1246.6,598.5 1260.0,601.7 1273.4,599.7 1285.6,594.8 1299.1,586.3 1310.1,576.5 1317.4,568.0 1324.7,550.9 1341.8,526.5 1366.2,511.8 1388.2,497.2 1410.2,480.1 1411.4,470.3 1419.9,445.9 1424.8,428.8 1426.0,411.7 1415.0,380.6 1394.3,357.5 1387.0,317.2 1388.2,305.0 1406.5,251.2 1428.5,192.7 1430.9,173.1 1456.5,158.5 1422.4,95.0" fill="rgba(97,43,145,.12)" stroke="#93379b" stroke-width="3" stroke-linejoin="round"/>
<polygon points="1617.5,470.0 1614.5,488.9 1605.9,505.9 1592.4,519.4 1575.4,528.0 1556.5,531.0 1537.6,528.0 1520.6,519.4 1507.1,505.9 1498.5,488.9 1495.5,470.0 1498.5,451.1 1507.1,434.1 1520.6,420.6 1537.6,412.0 1556.5,409.0 1575.4,412.0 1592.4,420.6 1605.9,434.1 1614.5,451.1" fill="rgba(97,43,145,.12)" stroke="#86318e" stroke-width="2.6"/>
<text x="664" y="271" font-size="24.5" text-anchor="start" fill="#5d6a93" stroke="rgba(245,245,250,.75)" stroke-width="3.2" stroke-linejoin="round" paint-order="stroke" letter-spacing="0" >China</text>
<text x="1057" y="165.5" font-size="19.6" text-anchor="start" fill="#5d6a93" stroke="rgba(245,245,250,.75)" stroke-width="3.2" stroke-linejoin="round" paint-order="stroke" letter-spacing="0" >North Korea</text>
<text x="1078" y="245.5" font-size="19.6" text-anchor="start" fill="#5d6a93" stroke="rgba(245,245,250,.75)" stroke-width="3.2" stroke-linejoin="round" paint-order="stroke" letter-spacing="0" >South Korea</text>
<text x="979" y="491" font-size="19.6" text-anchor="start" fill="#5d6a93" stroke="rgba(245,245,250,.75)" stroke-width="3.2" stroke-linejoin="round" paint-order="stroke" letter-spacing="0" >Taiwan</text>
<text x="684" y="561.5" font-size="24.5" text-anchor="start" fill="#5d6a93" stroke="rgba(245,245,250,.75)" stroke-width="3.2" stroke-linejoin="round" paint-order="stroke" letter-spacing="0" >Laos</text>
<text x="636" y="644.5" font-size="24.5" text-anchor="start" fill="#5d6a93" stroke="rgba(245,245,250,.75)" stroke-width="3.2" stroke-linejoin="round" paint-order="stroke" letter-spacing="0" >Thailand</text>
<text x="759" y="659" font-size="24.5" text-anchor="start" fill="#5d6a93" stroke="rgba(245,245,250,.75)" stroke-width="3.2" stroke-linejoin="round" paint-order="stroke" letter-spacing="0" >Vietnam</text>
<text x="985" y="702.5" font-size="24.5" text-anchor="start" fill="#5d6a93" stroke="rgba(245,245,250,.75)" stroke-width="3.2" stroke-linejoin="round" paint-order="stroke" letter-spacing="0" >Philippines</text>
<text x="618" y="527" font-size="24.5" text-anchor="start" fill="#5d6a93" stroke="rgba(245,245,250,.75)" stroke-width="3.2" stroke-linejoin="round" paint-order="stroke" letter-spacing="0" >mar</text>
<text x="618" y="552" font-size="24.5" text-anchor="start" fill="#5d6a93" stroke="rgba(245,245,250,.75)" stroke-width="3.2" stroke-linejoin="round" paint-order="stroke" letter-spacing="0" >na)</text>
<text x="-1" y="136" font-size="24.5" text-anchor="start" fill="#5d6a93" stroke="rgba(245,245,250,.75)" stroke-width="3.2" stroke-linejoin="round" paint-order="stroke" letter-spacing="0" >Uzbekistan</text>
<text x="-2" y="194" font-size="24.5" text-anchor="start" fill="#5d6a93" stroke="rgba(245,245,250,.75)" stroke-width="3.2" stroke-linejoin="round" paint-order="stroke" letter-spacing="0" >nis</text>
<text x="2" y="641" font-size="24" text-anchor="start" fill="#4f6d9c" stroke="rgba(245,245,250,.75)" stroke-width="3.2" stroke-linejoin="round" paint-order="stroke" letter-spacing="5" >Ar</text>
<text x="-3" y="1238" font-size="22" text-anchor="start" fill="#5d6a93" stroke="rgba(245,245,250,.75)" stroke-width="3.2" stroke-linejoin="round" paint-order="stroke" letter-spacing="0" >s</text>
<text x="276" y="1347.5" font-size="30" font-weight="700" fill="#4a4f62" letter-spacing="3">INDIAN</text>
</g>
</svg>
<div id="hdr">
  <svg class="back" viewBox="0 0 14 20"><path d="M11 2.5 L3 10 L11 17.5" fill="none" stroke="#58585c" stroke-width="2.1" stroke-linecap="butt" stroke-linejoin="miter"/></svg>
  <div class="ai"><svg width="53" height="53" viewBox="0 0 53 53"><g fill="none" stroke="#fff" stroke-width="1.9" stroke-linejoin="round"><path d="M23.2 17.5 C24.4 23.2 26 24.8 31.8 26.3 C26 27.8 24.4 29.4 23.2 35.2 C22 29.4 20.4 27.8 14.6 26.3 C20.4 24.8 22 23.2 23.2 17.5Z"/></g><path d="M34 13.6 C34.7 16.8 35.4 17.5 38.4 18.2 C35.4 18.9 34.7 19.6 34 22.8 C33.3 19.6 32.6 18.9 29.6 18.2 C32.6 17.5 33.3 16.8 34 13.6Z" fill="#fff"/><path d="M34.2 29.2 C34.9 32.4 35.6 33.1 38.6 33.8 C35.6 34.5 34.9 35.2 34.2 38.4 C33.5 35.2 32.8 34.5 29.8 33.8 C32.8 33.1 33.5 32.4 34.2 29.2Z" fill="#fff"/></svg></div>
  <div class="t1"><svg width="19" height="22" viewBox="0 0 19 22" style="vertical-align:-3px;margin-right:5px"><path d="M9.5 20.5 V3 M2.2 10.2 L9.5 2.8 L16.8 10.2" fill="none" stroke="#f4423c" stroke-width="2"/></svg><span class="red">106%</span> Increase in vessel count</div>
  <div class="t2">Vessels with DPRK compliance risks drifting in Japan EEZ</div>
  <div class="rbtn" style="left:1870px"><svg width="53" height="53" viewBox="0 0 53 53"><g fill="none" stroke="#1d1d20" stroke-width="2.5"><path d="M38.4 25.2 A12 12 0 1 0 25.4 38.4"/><path d="M26.4 14.5 C20.4 20.4 20.4 32.4 26.4 38.3 M26.4 14.5 C29.6 17.6 31.6 21.4 31.9 25.4 M15.4 22 H37.4 M15.4 31 H27.6 M26.4 14.5 V25"/></g><path d="M30.4 30.4 H38 V33 H34.9 L40.2 38.3 L38.3 40.2 L33 34.9 V38 H30.4Z" fill="#1d1d20"/></svg></div>
  <div class="rbtn" style="left:1962px"><svg width="53" height="53" viewBox="0 0 53 53"><g fill="none" stroke="#15144e" stroke-width="2.6" stroke-linejoin="round"><path d="M15.8 17.8 H21 L23.2 14 H30.4 L32.6 17.8 H37.8 Q39 17.8 39 19 V35 Q39 36.2 37.8 36.2 H15.8 Q14.6 36.2 14.6 35 V19 Q14.6 17.8 15.8 17.8Z"/><circle cx="26.8" cy="26.8" r="5.3"/></g></svg></div>
</div>

<div id="layers"><svg width="92" height="92" viewBox="0 0 92 92"><g fill="none" stroke="#fff" stroke-width="2.7" stroke-linejoin="round" stroke-linecap="round"><path d="M46 30 L62 39.2 L46 48.4 L30 39.2Z"/><path d="M30 46.4 L46 55.6 L62 46.4"/><path d="M30 53.6 L46 62.8 L62 53.6"/></g></svg></div>

<style>
#panel .ttl{position:absolute;left:72px;white-space:nowrap;line-height:30px;height:30px;font-size:24px;letter-spacing:-.05px}
#panel .tm{font-size:12.5px;position:relative;top:-8.6px;letter-spacing:0;margin-left:1px}
#panel .beta{position:absolute;left:78px;top:76px;width:401.5px;height:34px;border-radius:5px;background:#e8f0fe;color:#808899;font-weight:700;font-size:15.6px;line-height:34px;padding-left:6.6px;letter-spacing:-.1px}
#panel .meta{position:absolute;left:32.6px;white-space:nowrap;color:#8a90a3;height:30px;line-height:30px}
#panel .chip{position:absolute;left:181px;top:197px;width:55px;height:35.5px;border-radius:6px;background:#e8f0fe}
#panel a{color:#0000ee}
#panel .upd{-webkit-text-stroke:.4px;color:#2f7cf6;text-decoration:underline;text-decoration-thickness:1.6px;text-underline-offset:2.5px;font-size:21.2px;letter-spacing:-.1px}
#panel h3{position:absolute;left:32px;top:305.5px;margin:0;font-size:23px;font-weight:700;line-height:41.14px;white-space:nowrap}
#panel .body{position:absolute;left:32px;top:410.4px;width:540px;height:675.6px;overflow:hidden;line-height:41.14px;font-size:24px}
#panel .ln{white-space:nowrap;height:41.14px}
#panel .fade{position:absolute;left:0;top:972px;width:587px;height:116px;background:linear-gradient(180deg,rgba(245,255,254,0) 0%,rgba(245,255,254,.2) 27%,rgba(245,255,254,.5) 52%,rgba(245,255,254,.8) 76%,rgba(245,255,254,.97) 100%)}
#panel .foot{position:absolute;left:0;top:1165.5px;width:587px;height:43px;background:#fafafa;color:#8d94a8;font-size:20.6px;line-height:43px;white-space:nowrap;letter-spacing:.06px}
#panel .foot span.t{position:absolute;left:36.4px;top:.6px}
#panel .foot .tm{font-size:11px;top:-7px}
</style>
<div id="panel">
  <div class="ttl" style="top:37px">MAI Expert<span class="tm">™</span></div>
  <svg class="abs" style="left:31px;top:72px" width="34" height="34" viewBox="0 0 34 34"><defs><linearGradient id="sg1" x1="0" y1="0" x2="1" y2="1"><stop offset="0" stop-color="#45b392"/><stop offset=".45" stop-color="#2f97b4"/><stop offset="1" stop-color="#2c5fe8"/></linearGradient></defs>
    <path d="M13.3 5.8 C15.1 12.4 17.4 14.7 24 16.6 C17.4 18.5 15.1 20.8 13.3 27.4 C11.5 20.8 9.2 18.5 2.6 16.6 C9.2 14.7 11.5 12.4 13.3 5.8Z" fill="url(#sg1)"/>
    <path d="M13.3 13 C13.9 15.3 14.5 16 16.9 16.6 C14.5 17.2 13.9 17.9 13.3 20.2 C12.7 17.9 12.1 17.2 9.7 16.6 C12.1 16 12.7 15.3 13.3 13Z" fill="#f5fffe"/>
    <path d="M26.9 1.8 C27.6 5.2 28.4 6 31.9 6.9 C28.4 7.8 27.6 8.6 26.9 12 C26.2 8.6 25.4 7.8 21.9 6.9 C25.4 6 26.2 5.2 26.9 1.8Z" fill="#2c5fe0"/>
    <path d="M26.7 21.2 C27.4 24.6 28.2 25.4 31.7 26.3 C28.2 27.2 27.4 28 26.7 31.4 C26 28 25.2 27.2 21.7 26.3 C25.2 25.4 26 24.6 26.7 21.2Z" fill="#c8663a"/>
  </svg>
  <div class="beta">Beta</div>
  <svg class="abs" style="left:509.6px;top:78.6px" width="26" height="26" viewBox="0 0 26 26"><g fill="none" stroke="#15144e" stroke-width="2.2" stroke-linejoin="round"><rect x="3.8" y="3.8" width="18.2" height="18.2" rx="2.2"/><path d="M3.8 8.9 H22"/></g><path d="M9 12.6 H16.8 L12.9 16.9Z" fill="#15144e"/></svg>
  <div class="ttl" style="top:114.9px;letter-spacing:.08px">summary</div>
  <div class="meta" style="top:157.2px;letter-spacing:.03px">Based on the AI behavioral trend insight</div>
  <div class="meta" style="top:198px;letter-spacing:-.13px">Supported by</div>
  <div class="chip"><svg class="abs" style="left:6.5px;top:5.5px" width="25" height="24" viewBox="0 0 25 24"><path d="M1 6 V2.6 L2.9 1 L4.8 2.6 L6.7 1 L8.6 2.6 L10.5 1 L12.4 2.6 L14.3 1 L16.2 2.6 L18.1 1 L20 2.6 L21.9 1 L23.8 2.6 V6Z" fill="#2f7cf6"/><g fill="none" stroke="#2f7cf6" stroke-width="2.2"><rect x="1.9" y="4.6" width="21" height="17"/><path d="M1.9 9.8 H22.9 M12 9.8 V21.6 M12 15.6 H22.9"/></g></svg><span class="abs" style="left:36.3px;top:2.5px;line-height:30px;color:#2f7cf6">4</span></div>
  <div class="meta" style="top:198px;left:242.6px">media sources</div>
  <div class="meta" style="top:235.6px;font-size:22px;letter-spacing:-.13px">Generated on: 04/02/2026 07:35</div>
  <svg class="abs" style="left:359px;top:241px" width="22" height="22" viewBox="0 0 22 22"><path d="M17.6 6.2 A8 8 0 1 0 19.2 11" fill="none" stroke="#2f7cf6" stroke-width="2.3"/><path d="M19.6 2.2 V9 H12.8Z" fill="#2f7cf6"/></svg>
  <div class="meta upd" style="top:236.2px;left:387.7px">Update summary</div>
  <h3><span style="letter-spacing:-.235px">Unusual Increase in DPRK Sanctions-Risk</span><br><span style="letter-spacing:.01px">Vessels Drifting Near Japan</span></h3>
  <div class="body">
<div class="ln" style="letter-spacing:-0.098px">The anomaly reflects a spike to 9 DPRK</div>
<div class="ln" style="letter-spacing:0.207px">sanctions-risk vessels drifting in Japanese</div>
<div class="ln" style="letter-spacing:0.053px">waters during the week of 2026-01-28 to 2026-</div>
<div class="ln" style="letter-spacing:-0.003px">02-04, against an expected baseline of 2</div>
<div class="ln" style="letter-spacing:0.086px">vessels. This occurs amid heightened regional</div>
<div class="ln" style="letter-spacing:0.268px">tensions following North Korea's ballistic missile</div>
<div class="ln" style="letter-spacing:0.013px">tests on January 27, 2026, which landed in the</div>
<div class="ln" style="letter-spacing:-0.135px">Sea of Japan (East Sea) <a>[1]</a><a>[2]</a>. Japanese</div>
<div class="ln" style="letter-spacing:0.189px">authorities issued maritime warnings urging</div>
<div class="ln" style="letter-spacing:0.123px">vessels to avoid debris fields and report</div>
<div class="ln" style="letter-spacing:0.128px">potential hazards <a>[3]</a>, likely prompting cautious</div>
<div class="ln" style="letter-spacing:0.066px">operational behavior from at-risk vessels. The</div>
<div class="ln" style="letter-spacing:0.126px">timing aligns precisely with the anomaly period,</div>
<div class="ln" style="letter-spacing:0.098px">as the missile launches occurred hours before</div>
<div class="ln" style="letter-spacing:-0.080px">the reporting week began. South Korean and</div>
<div class="ln" style="letter-spacing:0.258px">Japanese military assessments confirm this</div>
<div class="ln" style="letter-spacing:0.182px">was North Korea's second missile test of 2026</div>
  </div>
  <div class="fade"></div>
  <svg class="abs" style="left:29.8px;top:1119px" width="28" height="30" viewBox="0 0 28 30"><g fill="none" stroke="#15144e" stroke-width="2.2" stroke-linejoin="round"><path d="M16.9 4 H5.2 Q4.2 4 4.2 5 V20.4"/><rect x="8.6" y="8.6" width="13.4" height="16.6" rx="1.6"/></g></svg>
  <svg class="abs" style="left:92px;top:1120px" width="28" height="26" viewBox="0 0 28 26"><rect x="1.8" y="11" width="4" height="12.6" fill="#15144e"/><path d="M9.6 23.6 V11.4 L15.6 3.4 L16.8 4.4 Q17.5 5.2 17.2 6.4 L16.2 10.6 H23.2 Q25.4 10.6 24.8 12.8 L21.8 22 Q21.2 23.6 19.6 23.6 Z" fill="none" stroke="#15144e" stroke-width="2.2" stroke-linejoin="round"/></svg>
  <svg class="abs" style="left:155px;top:1122px" width="28" height="26" viewBox="0 0 28 26"><rect x="22.2" y="2.4" width="4" height="12.6" fill="#15144e"/><path d="M18.4 2.4 V14.6 L12.4 22.6 L11.2 21.6 Q10.5 20.8 10.8 19.6 L11.8 15.4 H4.8 Q2.6 15.4 3.2 13.2 L6.2 4 Q6.8 2.4 8.4 2.4 Z" fill="none" stroke="#15144e" stroke-width="2.2" stroke-linejoin="round"/></svg>
  <div class="foot"><span class="t">MAI Expert<span class="tm">™</span> may be inaccurate. Double-check info.</span>
    <svg class="abs" style="left:525px;top:10.5px" width="24" height="24" viewBox="0 0 24 24"><circle cx="12" cy="12" r="9.8" fill="none" stroke="#8d94a8" stroke-width="2"/><rect x="11" y="10.6" width="2" height="6.6" fill="#8d94a8"/><rect x="11" y="6.8" width="2" height="2.2" fill="#8d94a8"/></svg>
  </div>
</div>

<style>
#popup{left:1309px;top:499px;width:494px;height:262px;border-radius:14px;background:#fff;border:none;overflow:hidden;box-shadow:0 1px 4px rgba(0,0,0,.3)}
#popup .ph{left:1.6px;top:1.8px;right:1.6px;height:74.8px;border-radius:12.4px 12.4px 0 0;background:#7c2f84}
#popup .pt{position:absolute;left:209.8px;top:24px;height:30px;line-height:30px;color:#fff;font-weight:700;font-size:20px;letter-spacing:-.13px;white-space:nowrap}
#popup .r1{position:absolute;left:31px;top:108.1px;height:30px;line-height:30px;font-weight:700;font-size:23px;letter-spacing:-.2px;white-space:nowrap}
#popup .r2{position:absolute;left:27.6px;top:156.5px;height:30px;line-height:30px;font-size:23.5px;letter-spacing:.06px;white-space:nowrap}
#popup .r3{position:absolute;left:28px;top:202.5px;height:28px;line-height:28px;font-size:20px;font-weight:700;white-space:nowrap}
#popup .chipr{position:absolute;left:245.2px;top:198.9px;width:155.6px;height:34.8px;border-radius:12px;background:#fde9eb;color:#f4423c;font-weight:700;font-size:17px;letter-spacing:-.09px;line-height:36.6px;text-align:center;white-space:nowrap}
#jlabel{position:absolute;left:1520px;top:390px;width:72.4px;height:39px;border-radius:6px;background:#e8f1fe;color:#15144e;font-weight:700;font-size:19.6px;line-height:39.6px;text-align:center;letter-spacing:0}
</style>
<div id="jlabel">Japan</div>
<svg class="abs" style="left:1535px;top:438px" width="44" height="58" viewBox="0 0 44 58"><path d="M21.8 53.6 C17 47 3.2 36.4 3.2 22.2 A18.6 18.6 0 0 1 40.4 22.2 C40.4 36.4 26.6 47 21.8 53.6Z" fill="#7c2f84" stroke="#fff" stroke-width="1.4"/><circle cx="21.8" cy="22.2" r="13" fill="#fff"/><g fill="none" stroke="#2b2566" stroke-width="1.5" stroke-linecap="round"><path d="M14.6 17.6 Q16.4 16 18.2 17.6 T21.8 17.6 T25.4 17.6 T29 17.6"/><path d="M14.6 22.4 Q16.4 20.8 18.2 22.4 T21.8 22.4 T25.4 22.4 T29 22.4"/><path d="M14.6 27.2 Q16.4 25.6 18.2 27.2 T21.8 27.2 T25.4 27.2 T29 27.2"/></g></svg>
<svg class="abs" style="left:1270px;top:249.4px" width="44" height="58" viewBox="0 0 44 58"><path d="M21.8 53.6 C17 47 3.2 36.4 3.2 22.2 A18.6 18.6 0 0 1 40.4 22.2 C40.4 36.4 26.6 47 21.8 53.6Z" fill="#7c2f84" stroke="#fff" stroke-width="1.4"/><circle cx="21.8" cy="22.2" r="13" fill="#fff"/><g fill="none" stroke="#2b2566" stroke-width="1.5" stroke-linecap="round"><path d="M14.6 17.6 Q16.4 16 18.2 17.6 T21.8 17.6 T25.4 17.6 T29 17.6"/><path d="M14.6 22.4 Q16.4 20.8 18.2 22.4 T21.8 22.4 T25.4 22.4 T29 22.4"/><path d="M14.6 27.2 Q16.4 25.6 18.2 27.2 T21.8 27.2 T25.4 27.2 T29 27.2"/></g></svg>
<div id="popup">
  <div class="ph abs"></div>
  <svg class="abs" style="left:169px;top:27px" width="30" height="26" viewBox="0 0 30 26"><g fill="none" stroke="#fff" stroke-width="2.2" stroke-linecap="round"><path d="M2.4 5.6 Q5.8 1.6 9.2 4.2 T15.6 5.2 T22 4.2 T27.6 2.6"/><path d="M2.4 13.6 Q5.8 9.6 9.2 12.2 T15.6 13.2 T22 12.2 T27.6 10.6"/><path d="M2.4 21.6 Q5.8 17.6 9.2 20.2 T15.6 21.2 T22 20.2 T27.6 18.6"/></g></svg>
  <div class="pt">Drifting</div>
  <svg class="abs" style="left:444px;top:29.4px" width="20" height="20" viewBox="0 0 20 20"><path d="M2.6 2.6 L17.4 17.4 M17.4 2.6 L2.6 17.4" stroke="#fff" stroke-width="2.3" fill="none"/></svg>
  <div class="r1"><svg width="19" height="22" viewBox="0 0 19 22" style="vertical-align:-3px;margin-right:5.4px"><path d="M9.5 20.5 V3 M2.2 10.2 L9.5 2.8 L16.8 10.2" fill="none" stroke="#f4423c" stroke-width="2"/></svg><span class="red" style="letter-spacing:-.6px;margin-right:2.2px">106%</span> Increase in vessel count</div>
  <div class="r2">Vessels with DPRK compliance risks</div>
  <div class="r3"><span style="color:#8a919f;font-weight:400;-webkit-text-stroke:.5px #8a919f;letter-spacing:.62px">Start date:</span><span style="margin-left:11px;letter-spacing:.1px">28 Jan '26</span></div>
  <div class="chipr">Ongoing increase</div>
</div>

<style>
#card .h1{position:absolute;left:59px;top:52px;height:30px;line-height:30px;white-space:nowrap;font-size:24px}
#card .h1 b{font-size:23px;letter-spacing:-.15px}
#card .h1 .sep{display:inline-block;width:1.6px;height:19px;background:#9aa0b0;margin:0 13.5px 0 13.5px;vertical-align:-2px}
#card .h1 .sub{color:#7f889c;letter-spacing:.08px}
#card .ylab{position:absolute;left:59px;top:100.5px;height:26px;line-height:26px;font-size:21px;color:#9a9a9a;white-space:nowrap;letter-spacing:.08px}
</style>
<div id="card">
<svg class="abs" style="left:0;top:0" width="1361" height="579" viewBox="0 0 1361 579" font-family="Liberation Sans, sans-serif">
<defs><filter id="msh" x="-60%" y="-60%" width="220%" height="240%"><feGaussianBlur in="SourceAlpha" stdDeviation="3"/><feOffset dx="0" dy="5"/><feComponentTransfer><feFuncA type="linear" slope=".6"/></feComponentTransfer><feMerge><feMergeNode/><feMergeNode in="SourceGraphic"/></feMerge></filter></defs>
<path d="M97.8 154.2 H1293.8" stroke="#e2e2e2" stroke-width="1.6"/>
<text x="94.6" y="161.2" text-anchor="end" font-size="19.5" fill="#9a9a9a" stroke="#9a9a9a" stroke-width=".3">12</text>
<path d="M97.8 239.1 H1293.8" stroke="#e2e2e2" stroke-width="1.6"/>
<text x="94.6" y="246.1" text-anchor="end" font-size="19.5" fill="#9a9a9a" stroke="#9a9a9a" stroke-width=".3">9</text>
<path d="M97.8 324.0 H1293.8" stroke="#e2e2e2" stroke-width="1.6"/>
<text x="94.6" y="331.0" text-anchor="end" font-size="19.5" fill="#9a9a9a" stroke="#9a9a9a" stroke-width=".3">6</text>
<path d="M97.8 408.5 H1293.8" stroke="#e2e2e2" stroke-width="1.6"/>
<text x="94.6" y="415.5" text-anchor="end" font-size="19.5" fill="#9a9a9a" stroke="#9a9a9a" stroke-width=".3">3</text>
<path d="M97.8 493.0 H1293.8" stroke="#e2e2e2" stroke-width="1.6"/>
<text x="94.6" y="500.0" text-anchor="end" font-size="19.5" fill="#9a9a9a" stroke="#9a9a9a" stroke-width=".3">0</text>
<path d="M108.3 355.1C109.3 354.4 112.1 352.3 114.0 351.2C115.9 350.0 117.8 347.9 119.6 348.3C121.5 348.8 123.3 351.2 125.2 353.9C127.1 356.6 129.0 362.5 131.0 364.5C132.9 366.5 134.9 368.0 136.8 366.0C138.8 364.0 140.6 353.9 142.6 352.4C144.5 350.9 146.7 355.7 148.6 356.9C150.6 358.1 152.3 360.0 154.2 359.6C156.1 359.3 158.1 354.9 160.0 354.6C161.8 354.4 163.4 356.2 165.2 358.4C167.1 360.6 169.1 366.1 171.0 367.8C172.9 369.5 174.6 368.5 176.6 368.5C178.5 368.6 180.6 369.4 182.6 368.2C184.6 367.1 186.8 363.3 188.7 361.4C190.5 359.6 192.1 359.7 193.9 356.9C195.8 354.1 198.1 348.2 200.0 344.8C201.9 341.4 203.7 337.7 205.6 336.5C207.5 335.3 209.4 338.5 211.3 337.6C213.3 336.6 215.4 331.6 217.4 330.9C219.3 330.3 221.2 332.8 223.1 333.5C225.0 334.2 226.8 336.9 228.7 335.0C230.6 333.1 232.4 323.6 234.3 322.2C236.2 320.8 238.1 324.1 240.0 326.7C241.9 329.3 243.9 336.8 245.8 337.6C247.7 338.4 249.5 331.0 251.4 331.5C253.2 332.1 255.2 340.7 257.1 341.1C259.0 341.5 260.8 335.0 262.7 334.0C264.6 332.9 266.5 333.5 268.4 335.0C270.3 336.6 272.1 342.0 274.0 343.3C276.0 344.7 278.1 344.4 280.1 343.0C282.0 341.6 283.8 336.1 285.6 335.0C287.5 333.9 289.4 335.0 291.4 336.5C293.4 338.0 295.5 341.7 297.4 344.1C299.4 346.5 301.1 350.2 303.0 350.9C304.9 351.6 306.8 347.8 308.8 348.3C310.7 348.8 312.6 353.5 314.5 353.9C316.4 354.3 318.2 351.9 320.1 350.9C322.0 349.9 323.9 348.7 325.8 347.9C327.7 347.0 329.7 349.0 331.6 346.0C333.5 343.1 335.4 331.1 337.3 330.0C339.2 328.9 341.0 337.8 342.9 339.5C344.8 341.3 346.9 339.3 348.8 340.6C350.7 341.9 352.6 346.2 354.5 347.1C356.4 348.0 358.3 346.4 360.3 345.9C362.2 345.4 364.2 345.8 366.2 344.1C368.1 342.4 370.0 338.1 371.9 335.8C373.8 333.4 375.6 328.3 377.5 330.0C379.4 331.8 381.3 342.6 383.2 346.3C385.1 350.1 386.8 352.1 388.8 352.7C390.8 353.3 393.6 349.2 395.3 350.1C396.9 351.1 397.2 355.0 398.8 358.4C400.3 361.8 402.6 368.5 404.5 370.5C406.4 372.5 408.3 370.6 410.2 370.5C412.2 370.5 414.1 371.2 416.0 370.2C417.9 369.2 419.6 366.6 421.6 364.5C423.6 362.3 426.2 356.8 428.1 357.2C430.0 357.6 431.3 365.0 433.1 366.7C434.8 368.5 436.5 366.4 438.6 367.8C440.8 369.2 444.1 376.4 446.2 375.0C448.3 373.7 449.6 361.9 451.2 359.6C452.8 357.4 453.9 360.8 455.9 361.4C457.9 362.1 461.2 364.0 463.3 363.4C465.4 362.8 466.7 358.4 468.6 358.0C470.4 357.5 472.6 359.9 474.6 360.7C476.6 361.5 478.7 363.3 480.6 362.7C482.6 362.0 484.3 360.9 486.2 356.9C488.1 352.9 490.1 340.2 492.0 338.5C493.9 336.7 495.7 345.2 497.6 346.3C499.4 347.4 501.3 344.4 503.3 345.1C505.3 345.9 507.4 349.2 509.3 350.9C511.3 352.6 513.0 352.9 514.9 355.4C516.8 357.9 518.7 364.1 520.7 366.0C522.6 367.9 524.8 366.5 526.7 366.7C528.6 367.0 530.2 369.7 532.0 367.5C533.8 365.3 535.9 355.4 537.7 353.6C539.6 351.8 541.5 359.4 543.3 356.9C545.1 354.4 546.6 341.9 548.6 338.8C550.6 335.7 553.3 341.3 555.4 338.5C557.6 335.7 559.6 326.1 561.5 322.2C563.3 318.2 565.0 314.6 566.7 314.6C568.5 314.6 570.1 318.8 572.0 322.2C573.9 325.6 576.2 330.5 578.1 335.0C580.0 339.5 581.5 345.0 583.4 349.4C585.3 353.8 587.5 359.1 589.4 361.4C591.3 363.8 593.1 362.0 595.0 363.7C596.9 365.5 598.8 370.7 600.7 372.0C602.7 373.3 604.8 371.8 606.8 371.6C608.8 371.4 610.9 371.0 612.8 370.8C614.7 370.6 616.2 369.4 618.1 370.5C620.0 371.6 622.3 375.3 624.2 377.3C626.0 379.3 627.6 382.0 629.4 382.3C631.3 382.5 633.6 379.8 635.5 378.8C637.4 377.9 638.9 377.3 640.8 376.6C642.7 375.8 644.8 377.3 646.8 374.3C648.8 371.3 651.0 361.8 652.9 358.4C654.7 355.0 656.3 355.2 658.1 353.9C660.0 352.6 662.3 349.1 664.2 350.6C666.1 352.0 667.6 361.6 669.5 362.7C671.4 363.7 673.6 360.9 675.5 356.9C677.5 352.9 679.7 341.0 681.3 338.5C682.8 336.0 683.2 338.7 685.0 341.8C686.8 344.9 689.7 352.4 691.8 356.9C693.9 361.4 695.9 368.7 697.8 369.0C699.8 369.3 701.5 361.7 703.4 358.4C705.3 355.2 707.3 351.3 709.2 349.4C711.1 347.5 712.9 347.8 714.9 347.1C716.9 346.4 719.2 344.5 721.3 345.1C723.3 345.8 725.1 349.2 727.0 350.9C728.9 352.6 730.6 355.4 732.6 355.4C734.5 355.4 736.7 353.1 738.6 350.9C740.6 348.6 742.5 342.2 744.4 341.8C746.3 341.4 748.1 345.6 750.0 348.6C751.8 351.6 753.5 357.6 755.2 359.9C757.0 362.3 758.8 362.0 760.7 362.7C762.6 363.4 764.5 363.5 766.6 364.2C768.6 364.8 771.3 365.4 773.1 366.7C774.8 368.0 775.7 375.8 777.2 372.0C778.6 368.2 780.4 348.9 781.7 344.1C782.9 339.2 783.2 343.3 784.7 343.0C786.2 342.8 788.9 340.2 790.7 342.6C792.6 344.9 794.3 352.8 796.0 356.9C797.8 361.0 799.4 366.6 801.3 367.2C803.2 367.7 805.3 360.9 807.4 360.2C809.4 359.5 811.5 361.1 813.4 363.0C815.3 364.8 816.9 368.7 818.7 371.3C820.5 373.8 822.4 377.4 824.3 378.1C826.2 378.7 828.1 376.0 830.0 375.3C831.9 374.7 833.9 373.2 835.8 374.0C837.7 374.8 839.6 379.9 841.5 380.3C843.4 380.8 845.4 376.5 847.4 376.9C849.4 377.2 851.6 382.1 853.4 382.3C855.3 382.5 856.9 380.3 858.7 378.1C860.6 375.8 862.5 370.3 864.5 368.7C866.4 367.1 868.4 370.6 870.4 368.2C872.3 365.9 874.3 355.3 876.1 354.6C877.9 354.0 879.5 361.3 881.4 364.5C883.3 367.6 885.5 373.4 887.4 373.5C889.4 373.7 891.3 367.7 893.2 365.2C895.1 362.8 896.9 358.5 898.8 358.7C900.6 359.0 902.2 363.8 904.0 366.7C905.9 369.7 908.1 374.9 910.1 376.3C912.1 377.6 914.2 373.8 916.1 374.6C918.0 375.3 919.5 379.0 921.4 380.8C923.3 382.6 925.4 384.1 927.5 385.3C929.5 386.5 931.5 388.5 933.5 387.9C935.5 387.3 937.7 383.4 939.5 381.8C941.4 380.3 942.9 379.8 944.8 378.8C946.7 377.9 948.9 376.9 950.9 376.1C952.9 375.3 955.0 374.8 956.9 374.3C958.8 373.8 960.4 373.5 962.2 373.1C964.0 372.7 965.7 375.6 967.5 371.7C969.3 367.8 971.3 352.6 973.2 349.7C975.1 346.7 976.9 355.2 978.8 354.2C980.8 353.2 982.9 344.4 984.9 343.6C986.8 342.9 988.5 349.1 990.4 349.8C992.3 350.4 994.3 348.3 996.2 347.7C998.2 347.0 1000.1 348.7 1002.0 345.8C1004.0 342.9 1005.9 332.3 1007.8 330.0C1009.8 327.7 1011.7 334.7 1013.7 331.9C1015.6 329.1 1017.5 316.4 1019.5 313.3C1021.4 310.2 1023.3 310.6 1025.3 313.3C1027.2 316.0 1029.2 325.5 1031.1 329.6C1032.9 333.6 1034.5 338.5 1036.4 337.7C1038.3 336.8 1040.3 323.4 1042.2 324.5C1044.1 325.5 1046.1 339.6 1048.0 344.0C1049.9 348.3 1051.9 348.7 1053.8 350.5C1055.7 352.2 1057.7 353.3 1059.6 354.6C1061.5 356.0 1063.5 357.5 1065.4 358.6C1067.3 359.6 1069.4 361.7 1071.2 360.9C1073.0 360.1 1074.5 356.6 1076.3 353.9C1078.1 351.2 1080.2 346.5 1082.1 344.6C1084.0 342.8 1086.0 344.6 1087.9 343.0C1089.8 341.5 1091.8 335.4 1093.7 335.4C1095.6 335.4 1097.6 341.7 1099.5 343.0C1101.5 344.3 1103.5 341.8 1105.3 343.0C1107.2 344.3 1108.8 347.4 1110.7 350.5C1112.5 353.5 1114.6 359.3 1116.5 361.6C1118.4 363.9 1120.1 362.6 1122.0 364.4C1123.9 366.2 1125.9 370.2 1127.8 372.5C1129.8 374.8 1131.7 376.6 1133.6 378.3C1135.6 380.0 1137.5 382.7 1139.4 382.9C1141.4 383.2 1143.3 379.6 1145.2 379.9C1147.2 380.2 1149.1 383.4 1151.0 384.8C1153.0 386.2 1154.9 387.2 1156.8 388.0C1158.8 388.9 1160.7 390.6 1162.6 389.9C1164.6 389.2 1166.5 385.8 1168.4 384.1C1170.4 382.4 1172.4 381.6 1174.2 379.5C1176.1 377.3 1177.7 376.2 1179.6 371.3C1181.4 366.5 1183.6 356.8 1185.4 350.5C1187.1 344.1 1188.3 335.8 1190.0 333.0C1191.8 330.3 1193.8 332.2 1195.8 333.7C1197.9 335.3 1200.2 343.4 1202.3 342.3C1204.5 341.2 1206.7 331.5 1208.6 327.2C1210.5 323.0 1212.1 316.3 1213.9 316.8C1215.7 317.3 1217.6 326.2 1219.5 330.0C1221.4 333.9 1223.6 341.6 1225.5 340.0C1227.5 338.4 1229.5 326.6 1231.3 320.3C1233.2 314.0 1234.6 304.7 1236.4 302.2C1238.3 299.7 1240.3 304.5 1242.2 305.2C1244.2 305.9 1246.1 310.4 1248.0 306.4C1250.0 302.3 1251.9 287.2 1253.8 280.8C1255.8 274.4 1257.7 268.1 1259.6 268.1C1261.6 268.1 1263.5 276.4 1265.4 280.8C1267.4 285.3 1269.3 294.8 1271.3 294.8C1273.2 294.8 1275.1 286.1 1277.1 280.8C1279.0 275.6 1280.9 266.7 1282.9 263.4C1284.8 260.1 1286.8 261.6 1288.7 261.1C1290.5 260.6 1292.9 260.5 1293.8 260.4L1293.8 451.4C1292.9 451.6 1290.5 452.0 1288.7 452.6C1286.8 453.1 1284.8 451.4 1282.9 454.9C1280.9 458.4 1279.0 468.2 1277.1 473.4C1275.1 478.7 1273.2 486.2 1271.3 486.2C1269.3 486.2 1267.4 478.0 1265.4 473.4C1263.5 468.9 1261.6 460.4 1259.6 459.1C1257.7 457.7 1255.7 459.7 1253.8 465.3C1252.0 471.0 1249.4 488.3 1248.5 492.9L108.3 493.0Z" fill="#e9f6fd"/>
<path d="M108.3 355.1C109.3 354.4 112.1 352.3 114.0 351.2C115.9 350.0 117.8 347.9 119.6 348.3C121.5 348.8 123.3 351.2 125.2 353.9C127.1 356.6 129.0 362.5 131.0 364.5C132.9 366.5 134.9 368.0 136.8 366.0C138.8 364.0 140.6 353.9 142.6 352.4C144.5 350.9 146.7 355.7 148.6 356.9C150.6 358.1 152.3 360.0 154.2 359.6C156.1 359.3 158.1 354.9 160.0 354.6C161.8 354.4 163.4 356.2 165.2 358.4C167.1 360.6 169.1 366.1 171.0 367.8C172.9 369.5 174.6 368.5 176.6 368.5C178.5 368.6 180.6 369.4 182.6 368.2C184.6 367.1 186.8 363.3 188.7 361.4C190.5 359.6 192.1 359.7 193.9 356.9C195.8 354.1 198.1 348.2 200.0 344.8C201.9 341.4 203.7 337.7 205.6 336.5C207.5 335.3 209.4 338.5 211.3 337.6C213.3 336.6 215.4 331.6 217.4 330.9C219.3 330.3 221.2 332.8 223.1 333.5C225.0 334.2 226.8 336.9 228.7 335.0C230.6 333.1 232.4 323.6 234.3 322.2C236.2 320.8 238.1 324.1 240.0 326.7C241.9 329.3 243.9 336.8 245.8 337.6C247.7 338.4 249.5 331.0 251.4 331.5C253.2 332.1 255.2 340.7 257.1 341.1C259.0 341.5 260.8 335.0 262.7 334.0C264.6 332.9 266.5 333.5 268.4 335.0C270.3 336.6 272.1 342.0 274.0 343.3C276.0 344.7 278.1 344.4 280.1 343.0C282.0 341.6 283.8 336.1 285.6 335.0C287.5 333.9 289.4 335.0 291.4 336.5C293.4 338.0 295.5 341.7 297.4 344.1C299.4 346.5 301.1 350.2 303.0 350.9C304.9 351.6 306.8 347.8 308.8 348.3C310.7 348.8 312.6 353.5 314.5 353.9C316.4 354.3 318.2 351.9 320.1 350.9C322.0 349.9 323.9 348.7 325.8 347.9C327.7 347.0 329.7 349.0 331.6 346.0C333.5 343.1 335.4 331.1 337.3 330.0C339.2 328.9 341.0 337.8 342.9 339.5C344.8 341.3 346.9 339.3 348.8 340.6C350.7 341.9 352.6 346.2 354.5 347.1C356.4 348.0 358.3 346.4 360.3 345.9C362.2 345.4 364.2 345.8 366.2 344.1C368.1 342.4 370.0 338.1 371.9 335.8C373.8 333.4 375.6 328.3 377.5 330.0C379.4 331.8 381.3 342.6 383.2 346.3C385.1 350.1 386.8 352.1 388.8 352.7C390.8 353.3 393.6 349.2 395.3 350.1C396.9 351.1 397.2 355.0 398.8 358.4C400.3 361.8 402.6 368.5 404.5 370.5C406.4 372.5 408.3 370.6 410.2 370.5C412.2 370.5 414.1 371.2 416.0 370.2C417.9 369.2 419.6 366.6 421.6 364.5C423.6 362.3 426.2 356.8 428.1 357.2C430.0 357.6 431.3 365.0 433.1 366.7C434.8 368.5 436.5 366.4 438.6 367.8C440.8 369.2 444.1 376.4 446.2 375.0C448.3 373.7 449.6 361.9 451.2 359.6C452.8 357.4 453.9 360.8 455.9 361.4C457.9 362.1 461.2 364.0 463.3 363.4C465.4 362.8 466.7 358.4 468.6 358.0C470.4 357.5 472.6 359.9 474.6 360.7C476.6 361.5 478.7 363.3 480.6 362.7C482.6 362.0 484.3 360.9 486.2 356.9C488.1 352.9 490.1 340.2 492.0 338.5C493.9 336.7 495.7 345.2 497.6 346.3C499.4 347.4 501.3 344.4 503.3 345.1C505.3 345.9 507.4 349.2 509.3 350.9C511.3 352.6 513.0 352.9 514.9 355.4C516.8 357.9 518.7 364.1 520.7 366.0C522.6 367.9 524.8 366.5 526.7 366.7C528.6 367.0 530.2 369.7 532.0 367.5C533.8 365.3 535.9 355.4 537.7 353.6C539.6 351.8 541.5 359.4 543.3 356.9C545.1 354.4 546.6 341.9 548.6 338.8C550.6 335.7 553.3 341.3 555.4 338.5C557.6 335.7 559.6 326.1 561.5 322.2C563.3 318.2 565.0 314.6 566.7 314.6C568.5 314.6 570.1 318.8 572.0 322.2C573.9 325.6 576.2 330.5 578.1 335.0C580.0 339.5 581.5 345.0 583.4 349.4C585.3 353.8 587.5 359.1 589.4 361.4C591.3 363.8 593.1 362.0 595.0 363.7C596.9 365.5 598.8 370.7 600.7 372.0C602.7 373.3 604.8 371.8 606.8 371.6C608.8 371.4 610.9 371.0 612.8 370.8C614.7 370.6 616.2 369.4 618.1 370.5C620.0 371.6 622.3 375.3 624.2 377.3C626.0 379.3 627.6 382.0 629.4 382.3C631.3 382.5 633.6 379.8 635.5 378.8C637.4 377.9 638.9 377.3 640.8 376.6C642.7 375.8 644.8 377.3 646.8 374.3C648.8 371.3 651.0 361.8 652.9 358.4C654.7 355.0 656.3 355.2 658.1 353.9C660.0 352.6 662.3 349.1 664.2 350.6C666.1 352.0 667.6 361.6 669.5 362.7C671.4 363.7 673.6 360.9 675.5 356.9C677.5 352.9 679.7 341.0 681.3 338.5C682.8 336.0 683.2 338.7 685.0 341.8C686.8 344.9 689.7 352.4 691.8 356.9C693.9 361.4 695.9 368.7 697.8 369.0C699.8 369.3 701.5 361.7 703.4 358.4C705.3 355.2 707.3 351.3 709.2 349.4C711.1 347.5 712.9 347.8 714.9 347.1C716.9 346.4 719.2 344.5 721.3 345.1C723.3 345.8 725.1 349.2 727.0 350.9C728.9 352.6 730.6 355.4 732.6 355.4C734.5 355.4 736.7 353.1 738.6 350.9C740.6 348.6 742.5 342.2 744.4 341.8C746.3 341.4 748.1 345.6 750.0 348.6C751.8 351.6 753.5 357.6 755.2 359.9C757.0 362.3 758.8 362.0 760.7 362.7C762.6 363.4 764.5 363.5 766.6 364.2C768.6 364.8 771.3 365.4 773.1 366.7C774.8 368.0 775.7 375.8 777.2 372.0C778.6 368.2 780.4 348.9 781.7 344.1C782.9 339.2 783.2 343.3 784.7 343.0C786.2 342.8 788.9 340.2 790.7 342.6C792.6 344.9 794.3 352.8 796.0 356.9C797.8 361.0 799.4 366.6 801.3 367.2C803.2 367.7 805.3 360.9 807.4 360.2C809.4 359.5 811.5 361.1 813.4 363.0C815.3 364.8 816.9 368.7 818.7 371.3C820.5 373.8 822.4 377.4 824.3 378.1C826.2 378.7 828.1 376.0 830.0 375.3C831.9 374.7 833.9 373.2 835.8 374.0C837.7 374.8 839.6 379.9 841.5 380.3C843.4 380.8 845.4 376.5 847.4 376.9C849.4 377.2 851.6 382.1 853.4 382.3C855.3 382.5 856.9 380.3 858.7 378.1C860.6 375.8 862.5 370.3 864.5 368.7C866.4 367.1 868.4 370.6 870.4 368.2C872.3 365.9 874.3 355.3 876.1 354.6C877.9 354.0 879.5 361.3 881.4 364.5C883.3 367.6 885.5 373.4 887.4 373.5C889.4 373.7 891.3 367.7 893.2 365.2C895.1 362.8 896.9 358.5 898.8 358.7C900.6 359.0 902.2 363.8 904.0 366.7C905.9 369.7 908.1 374.9 910.1 376.3C912.1 377.6 914.2 373.8 916.1 374.6C918.0 375.3 919.5 379.0 921.4 380.8C923.3 382.6 925.4 384.1 927.5 385.3C929.5 386.5 931.5 388.5 933.5 387.9C935.5 387.3 937.7 383.4 939.5 381.8C941.4 380.3 942.9 379.8 944.8 378.8C946.7 377.9 948.9 376.9 950.9 376.1C952.9 375.3 955.0 374.8 956.9 374.3C958.8 373.8 960.4 373.5 962.2 373.1C964.0 372.7 965.7 375.6 967.5 371.7C969.3 367.8 971.3 352.6 973.2 349.7C975.1 346.7 976.9 355.2 978.8 354.2C980.8 353.2 982.9 344.4 984.9 343.6C986.8 342.9 988.5 349.1 990.4 349.8C992.3 350.4 994.3 348.3 996.2 347.7C998.2 347.0 1000.1 348.7 1002.0 345.8C1004.0 342.9 1005.9 332.3 1007.8 330.0C1009.8 327.7 1011.7 334.7 1013.7 331.9C1015.6 329.1 1017.5 316.4 1019.5 313.3C1021.4 310.2 1023.3 310.6 1025.3 313.3C1027.2 316.0 1029.2 325.5 1031.1 329.6C1032.9 333.6 1034.5 338.5 1036.4 337.7C1038.3 336.8 1040.3 323.4 1042.2 324.5C1044.1 325.5 1046.1 339.6 1048.0 344.0C1049.9 348.3 1051.9 348.7 1053.8 350.5C1055.7 352.2 1057.7 353.3 1059.6 354.6C1061.5 356.0 1063.5 357.5 1065.4 358.6C1067.3 359.6 1069.4 361.7 1071.2 360.9C1073.0 360.1 1074.5 356.6 1076.3 353.9C1078.1 351.2 1080.2 346.5 1082.1 344.6C1084.0 342.8 1086.0 344.6 1087.9 343.0C1089.8 341.5 1091.8 335.4 1093.7 335.4C1095.6 335.4 1097.6 341.7 1099.5 343.0C1101.5 344.3 1103.5 341.8 1105.3 343.0C1107.2 344.3 1108.8 347.4 1110.7 350.5C1112.5 353.5 1114.6 359.3 1116.5 361.6C1118.4 363.9 1120.1 362.6 1122.0 364.4C1123.9 366.2 1125.9 370.2 1127.8 372.5C1129.8 374.8 1131.7 376.6 1133.6 378.3C1135.6 380.0 1137.5 382.7 1139.4 382.9C1141.4 383.2 1143.3 379.6 1145.2 379.9C1147.2 380.2 1149.1 383.4 1151.0 384.8C1153.0 386.2 1154.9 387.2 1156.8 388.0C1158.8 388.9 1160.7 390.6 1162.6 389.9C1164.6 389.2 1166.5 385.8 1168.4 384.1C1170.4 382.4 1172.4 381.6 1174.2 379.5C1176.1 377.3 1177.7 376.2 1179.6 371.3C1181.4 366.5 1183.6 356.8 1185.4 350.5C1187.1 344.1 1188.3 335.8 1190.0 333.0C1191.8 330.3 1193.8 332.2 1195.8 333.7C1197.9 335.3 1200.2 343.4 1202.3 342.3C1204.5 341.2 1206.7 331.5 1208.6 327.2C1210.5 323.0 1212.1 316.3 1213.9 316.8C1215.7 317.3 1217.6 326.2 1219.5 330.0C1221.4 333.9 1223.6 341.6 1225.5 340.0C1227.5 338.4 1229.5 326.6 1231.3 320.3C1233.2 314.0 1234.6 304.7 1236.4 302.2C1238.3 299.7 1240.3 304.5 1242.2 305.2C1244.2 305.9 1246.1 310.4 1248.0 306.4C1250.0 302.3 1251.9 287.2 1253.8 280.8C1255.8 274.4 1257.7 268.1 1259.6 268.1C1261.6 268.1 1263.5 276.4 1265.4 280.8C1267.4 285.3 1269.3 294.8 1271.3 294.8C1273.2 294.8 1275.1 286.1 1277.1 280.8C1279.0 275.6 1280.9 266.7 1282.9 263.4C1284.8 260.1 1286.8 261.6 1288.7 261.1C1290.5 260.6 1292.9 260.5 1293.8 260.4" fill="none" stroke="#b3e0fa" stroke-width="1.7" stroke-linejoin="round"/>
<path d="M1248.5 492.9C1249.4 488.3 1252.0 471.0 1253.8 465.3C1255.7 459.7 1257.7 457.7 1259.6 459.1C1261.6 460.4 1263.5 468.9 1265.4 473.4C1267.4 478.0 1269.3 486.2 1271.3 486.2C1273.2 486.2 1275.1 478.7 1277.1 473.4C1279.0 468.2 1280.9 458.4 1282.9 454.9C1284.8 451.4 1286.8 453.1 1288.7 452.6C1290.5 452.0 1292.9 451.6 1293.8 451.4" fill="none" stroke="#b3e0fa" stroke-width="1.7" stroke-linejoin="round"/>
<path d="M108.3 493.0 H1293.8" stroke="#a9ddf8" stroke-width="1.8"/>
<path d="M171.3 493.0 V502.5" stroke="#b3e0fa" stroke-width="1.8"/>
<text x="171.3" y="520.0" text-anchor="middle" font-size="18.6" fill="#9a9a9a" stroke="#9a9a9a" stroke-width=".35">May '22</text>
<path d="M245.6 493.0 V502.5" stroke="#b3e0fa" stroke-width="1.8"/>
<text x="245.6" y="520.0" text-anchor="middle" font-size="18.6" fill="#9a9a9a" stroke="#9a9a9a" stroke-width=".35">Aug '22</text>
<path d="M320.0 493.0 V502.5" stroke="#b3e0fa" stroke-width="1.8"/>
<text x="320.0" y="520.0" text-anchor="middle" font-size="18.6" fill="#9a9a9a" stroke="#9a9a9a" stroke-width=".35">Nov '22</text>
<path d="M394.3 493.0 V502.5" stroke="#b3e0fa" stroke-width="1.8"/>
<text x="394.3" y="520.0" text-anchor="middle" font-size="18.6" fill="#9a9a9a" stroke="#9a9a9a" stroke-width=".35">Feb '23</text>
<path d="M468.7 493.0 V502.5" stroke="#b3e0fa" stroke-width="1.8"/>
<text x="468.7" y="520.0" text-anchor="middle" font-size="18.6" fill="#9a9a9a" stroke="#9a9a9a" stroke-width=".35">May '23</text>
<path d="M543.0 493.0 V502.5" stroke="#b3e0fa" stroke-width="1.8"/>
<text x="543.0" y="520.0" text-anchor="middle" font-size="18.6" fill="#9a9a9a" stroke="#9a9a9a" stroke-width=".35">Aug '23</text>
<path d="M617.8 493.0 V502.5" stroke="#b3e0fa" stroke-width="1.8"/>
<text x="617.8" y="520.0" text-anchor="middle" font-size="18.6" fill="#9a9a9a" stroke="#9a9a9a" stroke-width=".35">Nov '23</text>
<path d="M692.3 493.0 V502.5" stroke="#b3e0fa" stroke-width="1.8"/>
<text x="692.3" y="520.0" text-anchor="middle" font-size="18.6" fill="#9a9a9a" stroke="#9a9a9a" stroke-width=".35">Feb '24</text>
<path d="M766.7 493.0 V502.5" stroke="#b3e0fa" stroke-width="1.8"/>
<text x="766.7" y="520.0" text-anchor="middle" font-size="18.6" fill="#9a9a9a" stroke="#9a9a9a" stroke-width=".35">May '24</text>
<path d="M841.0 493.0 V502.5" stroke="#b3e0fa" stroke-width="1.8"/>
<text x="841.0" y="520.0" text-anchor="middle" font-size="18.6" fill="#9a9a9a" stroke="#9a9a9a" stroke-width=".35">Aug '24</text>
<path d="M915.8 493.0 V502.5" stroke="#b3e0fa" stroke-width="1.8"/>
<text x="915.8" y="520.0" text-anchor="middle" font-size="18.6" fill="#9a9a9a" stroke="#9a9a9a" stroke-width=".35">Nov '24</text>
<path d="M990.2 493.0 V502.5" stroke="#b3e0fa" stroke-width="1.8"/>
<text x="990.2" y="520.0" text-anchor="middle" font-size="18.6" fill="#9a9a9a" stroke="#9a9a9a" stroke-width=".35">Feb '25</text>
<path d="M1065.0 493.0 V502.5" stroke="#b3e0fa" stroke-width="1.8"/>
<text x="1065.0" y="520.0" text-anchor="middle" font-size="18.6" fill="#9a9a9a" stroke="#9a9a9a" stroke-width=".35">May '25</text>
<path d="M1133.2 493.0 V502.5" stroke="#b3e0fa" stroke-width="1.8"/>
<text x="1133.2" y="520.0" text-anchor="middle" font-size="18.6" fill="#9a9a9a" stroke="#9a9a9a" stroke-width=".35">Jul '25</text>
<path d="M1202.3 493.0 V502.5" stroke="#b3e0fa" stroke-width="1.8"/>
<text x="1202.3" y="520.0" text-anchor="middle" font-size="18.6" fill="#9a9a9a" stroke="#9a9a9a" stroke-width=".35">Oct '25</text>
<path d="M1293.8 493.0 V502.5" stroke="#b3e0fa" stroke-width="1.8"/>
<text x="1302.0" y="520.0" text-anchor="end" font-size="18.6" fill="#9a9a9a" stroke="#9a9a9a" stroke-width=".35">Feb '26</text>
<path d="M108.3 436.5C110.2 436.5 112.1 436.5 114.0 436.5C115.9 436.5 117.8 455.4 119.8 464.8C121.7 474.2 123.6 493.0 125.5 493.0C127.4 493.0 129.3 478.9 131.2 464.8C133.1 450.7 135.0 408.3 136.9 408.3C138.8 408.3 140.8 464.8 142.7 464.8C144.6 464.8 146.5 464.8 148.4 464.8C150.3 464.8 152.2 436.5 154.1 436.5C156.0 436.5 157.9 455.4 159.8 464.8C161.8 474.2 163.7 493.0 165.6 493.0C167.5 493.0 169.4 464.8 171.3 464.8C173.2 464.8 175.1 464.8 177.0 464.8C178.9 464.8 180.8 436.5 182.8 436.5C184.7 436.5 186.6 436.5 188.5 436.5C190.4 436.5 192.3 408.3 194.2 408.3C196.1 408.3 198.0 408.3 199.9 408.3C201.8 408.3 203.8 436.5 205.7 436.5C207.6 436.5 209.5 408.3 211.4 408.3C213.3 408.3 215.2 436.5 217.1 436.5C219.0 436.5 220.9 436.5 222.8 436.5C224.8 436.5 226.7 380.1 228.6 380.1C230.5 380.1 232.4 422.4 234.3 436.5C236.2 450.7 238.1 464.8 240.0 464.8C241.9 464.8 243.8 408.3 245.7 408.3C247.7 408.3 249.6 464.8 251.5 464.8C253.4 464.8 255.3 408.3 257.2 408.3C259.1 408.3 261.0 427.1 262.9 436.5C264.8 445.9 266.7 464.8 268.7 464.8C270.6 464.8 272.5 446.0 274.4 436.5C276.3 427.1 278.2 408.3 280.1 408.3C282.0 408.3 283.9 427.1 285.8 436.5C287.7 445.9 289.7 464.8 291.6 464.8C293.5 464.8 295.4 464.8 297.3 464.8C299.2 464.8 301.1 436.5 303.0 436.5C304.9 436.5 306.8 464.8 308.7 464.8C310.7 464.8 312.6 436.5 314.5 436.5C316.4 436.5 318.3 436.5 320.2 436.5C322.1 436.5 324.0 436.5 325.9 436.5C327.8 436.5 329.7 380.1 331.7 380.1C333.6 380.1 335.5 464.8 337.4 464.8C339.3 464.8 341.2 436.5 343.1 436.5C345.0 436.5 346.9 464.8 348.8 464.8C350.7 464.8 352.7 436.5 354.6 436.5C356.5 436.5 358.4 436.5 360.3 436.5C362.2 436.5 364.1 408.3 366.0 408.3C367.9 408.3 369.8 408.3 371.7 408.3C373.7 408.3 375.6 493.0 377.5 493.0C379.4 493.0 381.3 474.2 383.2 464.8C385.1 455.4 387.0 436.5 388.9 436.5C390.8 436.5 392.7 493.0 394.7 493.0C396.6 493.0 398.5 493.0 400.4 493.0C402.3 493.0 404.2 464.8 406.1 464.8C408.0 464.8 409.9 464.8 411.8 464.8C413.7 464.8 415.7 436.5 417.6 436.5C419.5 436.5 421.4 436.5 423.3 436.5C425.2 436.5 427.1 493.0 429.0 493.0C430.9 493.0 432.8 464.8 434.7 464.8C436.7 464.8 438.6 493.0 440.5 493.0C442.4 493.0 444.3 408.3 446.2 408.3C448.1 408.3 450.0 464.8 451.9 464.8C453.8 464.8 455.7 464.8 457.7 464.8C459.6 464.8 461.5 436.5 463.4 436.5C465.3 436.5 467.2 464.8 469.1 464.8C471.0 464.8 472.9 464.8 474.8 464.8C476.7 464.8 478.6 450.7 480.6 436.5C482.5 422.4 484.4 380.1 486.3 380.1C488.2 380.1 490.1 464.8 492.0 464.8C493.9 464.8 495.8 436.5 497.7 436.5C499.6 436.5 501.6 464.8 503.5 464.8C505.4 464.8 507.3 464.8 509.2 464.8C511.1 464.8 513.0 493.0 514.9 493.0C516.8 493.0 518.7 464.8 520.6 464.8C522.6 464.8 524.5 464.8 526.4 464.8C528.3 464.8 530.2 408.3 532.1 408.3C534.0 408.3 535.9 464.8 537.8 464.8C539.7 464.8 541.6 380.1 543.6 380.1C545.5 380.1 547.4 436.5 549.3 436.5C551.2 436.5 553.1 380.1 555.0 380.1C556.9 380.1 558.8 380.1 560.7 380.1C562.6 380.1 564.6 422.4 566.5 436.5C568.4 450.7 570.3 455.4 572.2 464.8C574.1 474.2 576.0 493.0 577.9 493.0C579.8 493.0 581.7 493.0 583.6 493.0C585.6 493.0 587.5 464.8 589.4 464.8C591.3 464.8 593.2 493.0 595.1 493.0C597.0 493.0 598.9 464.8 600.8 464.8C602.7 464.8 604.6 464.8 606.6 464.8C608.5 464.8 610.4 464.8 612.3 464.8C614.2 464.8 616.1 493.0 618.0 493.0C619.9 493.0 621.8 493.0 623.7 493.0C625.6 493.0 627.6 464.8 629.5 464.8C631.4 464.8 633.3 464.8 635.2 464.8C637.1 464.8 639.0 464.8 640.9 464.8C642.8 464.8 644.7 408.3 646.6 408.3C648.6 408.3 650.5 436.5 652.4 436.5C654.3 436.5 656.2 436.5 658.1 436.5C660.0 436.5 661.9 493.0 663.8 493.0C665.7 493.0 667.6 455.4 669.6 436.5C671.5 417.7 673.4 380.1 675.3 380.1C677.2 380.1 679.1 446.0 681.0 464.8C682.9 483.6 684.8 493.0 686.7 493.0C688.6 493.0 690.6 493.0 692.5 493.0C694.4 493.0 696.3 450.7 698.2 436.5C700.1 422.4 702.0 408.3 703.9 408.3C705.8 408.3 707.7 436.5 709.6 436.5C711.5 436.5 713.5 436.5 715.4 436.5C717.3 436.5 719.2 464.8 721.1 464.8C723.0 464.8 724.9 464.8 726.8 464.8C728.7 464.8 730.6 446.0 732.5 436.5C734.5 427.1 736.4 408.3 738.3 408.3C740.2 408.3 742.1 450.7 744.0 464.8C745.9 478.9 747.8 493.0 749.7 493.0C751.6 493.0 753.5 464.8 755.5 464.8C757.4 464.8 759.3 464.8 761.2 464.8C763.1 464.8 765.0 464.8 766.9 464.8C768.8 464.8 770.7 493.0 772.6 493.0C774.5 493.0 776.5 351.8 778.4 351.8C780.3 351.8 782.2 413.0 784.1 436.5C786.0 460.1 787.9 493.0 789.8 493.0C791.7 493.0 793.6 493.0 795.5 493.0C797.5 493.0 799.4 436.5 801.3 436.5C803.2 436.5 805.1 455.4 807.0 464.8C808.9 474.2 810.8 493.0 812.7 493.0C814.6 493.0 816.5 493.0 818.5 493.0C820.4 493.0 822.3 464.8 824.2 464.8C826.1 464.8 828.0 464.8 829.9 464.8C831.8 464.8 833.7 493.0 835.6 493.0C837.5 493.0 839.5 464.8 841.4 464.8C843.3 464.8 845.2 493.0 847.1 493.0C849.0 493.0 850.9 474.2 852.8 464.8C854.7 455.4 856.6 436.5 858.5 436.5C860.5 436.5 862.4 464.8 864.3 464.8C866.2 464.8 868.1 408.3 870.0 408.3C871.9 408.3 873.8 493.0 875.7 493.0C877.6 493.0 879.5 493.0 881.5 493.0C883.4 493.0 885.3 436.5 887.2 436.5C889.1 436.5 891.0 436.5 892.9 436.5C894.8 436.5 896.7 493.0 898.6 493.0C900.5 493.0 902.5 493.0 904.4 493.0C906.3 493.0 908.2 464.8 910.1 464.8C912.0 464.8 913.9 493.0 915.8 493.0C917.7 493.0 919.6 493.0 921.5 493.0C923.5 493.0 925.4 493.0 927.3 493.0C929.2 493.0 931.1 464.8 933.0 464.8C934.9 464.8 936.8 464.8 938.7 464.8C940.6 464.8 942.5 464.8 944.4 464.8C946.4 464.8 948.3 464.8 950.2 464.8C952.1 464.8 954.0 464.8 955.9 464.8C957.8 464.8 959.7 464.8 961.6 464.8C963.5 464.8 965.4 380.1 967.4 380.1C969.3 380.1 971.2 464.8 973.1 464.8C975.0 464.8 976.9 408.3 978.8 408.3C980.7 408.3 982.6 464.8 984.5 464.8C986.4 464.8 988.4 436.5 990.3 436.5C992.2 436.5 994.1 436.5 996.0 436.5C997.9 436.5 999.8 380.1 1001.7 380.1C1003.6 380.1 1005.5 436.5 1007.4 436.5C1009.4 436.5 1011.3 351.8 1013.2 351.8C1015.1 351.8 1017.0 389.5 1018.9 408.3C1020.8 427.1 1022.7 464.8 1024.6 464.8C1026.5 464.8 1028.4 464.8 1030.4 464.8C1032.3 464.8 1034.2 380.1 1036.1 380.1C1038.0 380.1 1039.9 493.0 1041.8 493.0C1043.7 493.0 1045.6 464.8 1047.5 464.8C1049.4 464.8 1051.4 464.8 1053.3 464.8C1055.2 464.8 1057.1 464.8 1059.0 464.8C1060.9 464.8 1062.8 464.8 1064.7 464.8C1066.6 464.8 1068.5 445.9 1070.4 436.5C1072.4 427.1 1074.3 408.3 1076.2 408.3C1078.1 408.3 1080.0 436.5 1081.9 436.5C1083.8 436.5 1085.7 408.3 1087.6 408.3C1089.5 408.3 1091.4 464.8 1093.4 464.8C1095.3 464.8 1097.2 436.5 1099.1 436.5C1101.0 436.5 1102.9 455.4 1104.8 464.8C1106.7 474.2 1108.6 493.0 1110.5 493.0C1112.4 493.0 1114.4 464.8 1116.3 464.8C1118.2 464.8 1120.1 493.0 1122.0 493.0C1123.9 493.0 1125.8 493.0 1127.7 493.0C1129.6 493.0 1131.5 493.0 1133.4 493.0C1135.4 493.0 1137.3 464.8 1139.2 464.8C1141.1 464.8 1143.0 493.0 1144.9 493.0C1146.8 493.0 1148.7 493.0 1150.6 493.0C1152.5 493.0 1154.4 493.0 1156.4 493.0C1158.3 493.0 1160.2 464.8 1162.1 464.8C1164.0 464.8 1165.9 464.8 1167.8 464.8C1169.7 464.8 1171.6 450.7 1173.5 436.5C1175.4 422.4 1177.3 380.1 1179.3 380.1C1181.2 380.1 1183.1 380.1 1185.0 380.1C1186.9 380.1 1188.8 422.4 1190.7 436.5C1192.6 450.7 1194.5 464.8 1196.4 464.8C1198.3 464.8 1200.3 380.1 1202.2 380.1C1204.1 380.1 1206.0 380.1 1207.9 380.1C1209.8 380.1 1211.7 464.8 1213.6 464.8C1215.5 464.8 1217.4 464.8 1219.3 464.8C1221.3 464.8 1223.2 351.8 1225.1 351.8C1227.0 351.8 1228.9 351.8 1230.8 351.8C1232.7 351.8 1234.6 408.3 1236.5 408.3C1238.4 408.3 1240.3 408.3 1242.3 408.3C1244.2 408.3 1246.1 267.2 1248.0 267.2C1249.9 267.2 1251.8 328.3 1253.7 351.8C1255.6 375.4 1257.5 394.2 1259.4 408.3C1261.3 422.4 1263.3 436.5 1265.2 436.5C1267.1 436.5 1269.0 403.6 1270.9 380.1C1272.8 356.6 1274.7 295.4 1276.6 295.4C1278.5 295.4 1280.4 351.8 1282.3 351.8C1284.3 351.8 1286.2 351.8 1288.1 351.8C1290.0 351.8 1291.9 257.8 1293.8 210.7" fill="none" stroke="#0c1f57" stroke-width="2" stroke-linejoin="round"/>
<g filter="url(#msh)"><circle cx="778.4" cy="351.8" r="9.6" fill="#f4403a" stroke="#ff1616" stroke-width="2"/></g>
<g filter="url(#msh)"><circle cx="1248.0" cy="267.2" r="9.6" fill="#f4403a" stroke="#ff1616" stroke-width="2"/></g>
<g filter="url(#msh)"><circle cx="1293.8" cy="210.7" r="9.6" fill="#f4403a" stroke="#ff1616" stroke-width="2"/></g>
</svg>
  <div class="h1"><b>Vessel count</b><span class="sep"></span><span class="sub">Vessels with DPRK compliance risks drifting in Japan EEZ</span></div>
  <div class="ylab">No. of vessels</div>
  <svg class="abs" style="left:1190px;top:53px" width="28" height="28" viewBox="0 0 28 28"><g fill="none" stroke="#15144e" stroke-width="2.2" stroke-linejoin="round"><path d="M3.8 7.8 H9 L10.8 4.8 H17.2 L19 7.8 H24.2 V23 H3.8Z"/><circle cx="14" cy="15.2" r="4.3"/></g></svg>
  <svg class="abs" style="left:1256px;top:54px" width="28" height="28" viewBox="0 0 28 28"><g fill="none" stroke="#15144e" stroke-width="2.4" stroke-linecap="butt" stroke-linejoin="round"><path d="M3.6 9.4 V5.2 Q3.6 3.6 5.2 3.6 H9.4 M18.6 3.6 H22.8 Q24.4 3.6 24.4 5.2 V9.4 M24.4 18.6 V22.8 Q24.4 24.4 22.8 24.4 H21.6 M9.4 24.4 H5.2 Q3.6 24.4 3.6 22.8 V18.6"/><circle cx="13.2" cy="13" r="4"/><path d="M16.2 16 L20.6 20.4"/></g></svg>
</div>

<style>
#thumb{position:absolute;left:659.8px;top:127.8px;width:115.2px;height:115.5px;overflow:hidden;background:#a9d6f2}
#thumb .lbl{position:absolute;left:10.4px;top:88.5px;font-size:23px;line-height:30px;color:#000;letter-spacing:.2px}
#attr{position:absolute;left:1507px;top:1342.6px;width:560px;height:30px;background:rgba(255,255,255,.55);color:#2a2a2a;font-size:21.5px;line-height:32px;white-space:nowrap;padding-left:9px;letter-spacing:.1px}
#mbx{position:absolute;left:4.5px;top:1328px}
</style>
<div id="thumb"><svg width="116" height="116" viewBox="0 0 116 116"><g fill="#f4f0e6" stroke="#c9c5c1" stroke-width="1">
<path d="M0 116 L0 112 L7.8 92.4 L21.5 72.4 L27.8 63.6 L39 61 L50.3 58.6 L64 57.4 L66.6 67.4 L70.4 69.9 L80.4 72.4 L88 74.9 L90.4 69.9 L100.4 71 L116 72.4 V116Z"/>
<path d="M22.8 40 L28 36.5 L40 36 L49 39.5 L46 46 L42 52 L36 56.5 L27 57 L23.5 52Z"/>
<path d="M35 19 L44 17 L50 12 L58 10 L62 0 H116 V42 L108 44 L104 52 L100 57 L94 55 L90 45 L86 38 L80 33 L76 30 L70 31 L74 38 L80 46 L83.5 51 L80 52 L74 46 L68 38 L62 36 L56 38 L50 38.5 L44 37 L40 30Z"/>
<path d="M21 0 H28 L27 6 L22 7Z M34 0 H44 L45 7 L40 11 L35 8Z"/>
<path d="M105 43 L116 42 V57 L108 57Z"/>
<path d="M88 60 L92 58 L94 62 L90 63Z" />
</g><g fill="none" stroke="#c9c5c1" stroke-width="1.1"><path d="M0 98 L14 98 L14 88 L21 86 L21.5 72.4 M21 86 L37 100 L52 116 M64 57.4 L66 88 L68 93 L52 103 L37 100 M68 93 L80 96 L98 108 L98 116 M80 96 L78 116 M100.4 71 L100 95 L116 95 M58 10 L62 18 L70 17 L74 22 L82 20 L86 26 L92 24 L98 28 L104 26 M62 18 L60 26 L66 30 L70 31 M74 22 L76 30 M86 26 L86 38 M98 28 L96 40 L90 45 M76 0 L76 12 L88 14 L92 24 M96 0 L97 12 L108 14 L116 14 M46 46 L50 38.5"/></g></svg><div class="lbl">Map</div></div>
<div id="attr">© Mapbox © OpenStreetMap <b>Improve this map</b> © Maxar</div>
<svg id="mbx" width="150" height="34" viewBox="0 0 150 34"><circle cx="18.5" cy="19.5" r="13.2" fill="none" stroke="#8a8a8a" stroke-width="7" stroke-opacity=".75"/><circle cx="18.5" cy="19.5" r="13.2" fill="none" stroke="#fff" stroke-width="4.2"/><path d="M12 26.5 C9 20 13 13.5 19.5 13.2 C25.5 13 29 19 25 23 C21.5 26.5 16 27.2 12 26.5Z" fill="#fff"/><path d="M20.4 16.2 L21.5 18.8 L24.1 19.9 L21.5 21 L20.4 23.6 L19.3 21 L16.7 19.9 L19.3 18.8Z" fill="#05070f"/><text x="37" y="27.4" font-family="Liberation Sans, sans-serif" font-weight="700" font-size="26.8" fill="#fff" stroke="#8a8a8a" stroke-opacity=".8" stroke-width="2.4" paint-order="stroke" stroke-linejoin="round" letter-spacing="-.3">mapbox</text></svg>

</body>
</html>
